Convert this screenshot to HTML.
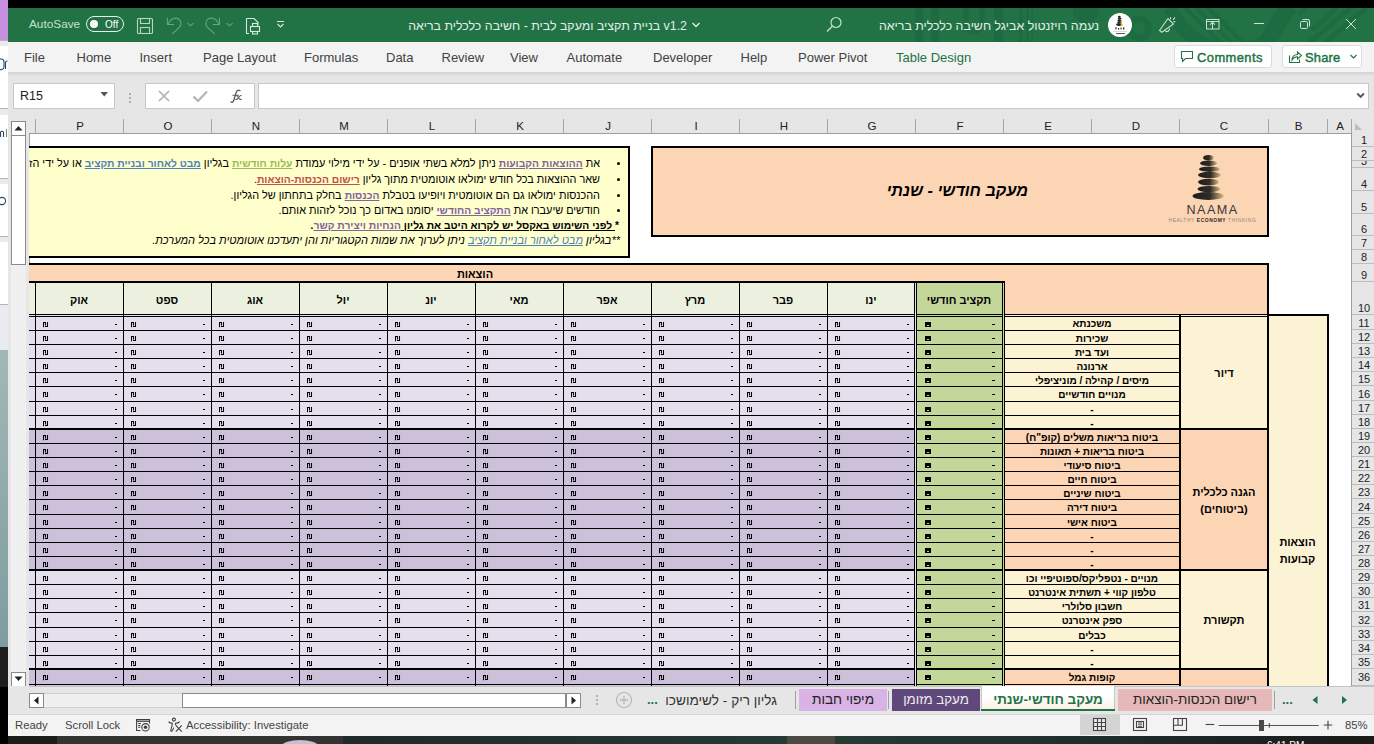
<!DOCTYPE html>
<html><head><meta charset="utf-8"><style>
*{box-sizing:border-box;margin:0;padding:0}
html,body{width:1374px;height:744px;overflow:hidden}
body{position:relative;background:#e6e6e6;font-family:"Liberation Sans",sans-serif;color:#000}
div{position:absolute}
.ui{color:#424242;font-size:13px;line-height:15px}
.he{direction:rtl}
.cell{font-weight:bold;font-size:10px;line-height:12px;text-align:center}
</style></head><body>
<div style="position:absolute;left:0px;top:0px;width:1374px;height:8px;background:#000"></div>
<div style="position:absolute;left:8px;top:8px;width:1366px;height:34px;background:#217346;overflow:hidden">
<svg width="1366" height="34" style="position:absolute;left:0;top:0" viewBox="8 8 1366 34">
 <g fill="#1f6b41">
  <rect x="915" y="8" width="8" height="34"/>
  <rect x="931" y="8" width="8" height="34"/>
  <rect x="994" y="8" width="9" height="34"/>
  <rect x="1019" y="8" width="4" height="34"/>
  <rect x="1026" y="8" width="3" height="34"/>
  <rect x="1031" y="8" width="2" height="34"/>
  <circle cx="1086" cy="10" r="13"/>
 </g>
 <path d="M966 8 V24 A8 8 0 0 0 982 24 V8" fill="none" stroke="#1f6b41" stroke-width="5"/>
 <circle cx="1139" cy="28.5" r="9.5" fill="none" stroke="#1f6b41" stroke-width="7"/>
 <path d="M1170 8 A70 70 0 0 0 1262 44" fill="none" stroke="#1f6b41" stroke-width="14"/>
 <path d="M1290 6 Q1276 24 1266 44" fill="none" stroke="#1f6b41" stroke-width="17"/>
 <g stroke="#1f6b41" stroke-width="4">
  <line x1="1185" y1="8" x2="1222" y2="44"/>
  <line x1="1196" y1="8" x2="1233" y2="44"/>
  <line x1="1208" y1="8" x2="1245" y2="44"/>
  <line x1="1299" y1="14" x2="1306" y2="8" stroke-width="4"/>
  <line x1="1312" y1="30" x2="1337" y2="8" stroke-width="5"/>
  <line x1="1308" y1="44" x2="1350" y2="8" stroke-width="5"/>
  <line x1="1324" y1="44" x2="1366" y2="8" stroke-width="5"/>
 </g>
</svg></div>
<div style="position:absolute;left:29px;top:17px;white-space:nowrap;color:#c7e0cf;font-size:11.8px;line-height:14px">AutoSave</div>
<div style="position:absolute;left:86px;top:16px;width:38px;height:16px;border:1.3px solid #e8f2ec;border-radius:8px"></div>
<div style="position:absolute;left:90px;top:20px;width:8px;height:8px;background:#fff;border-radius:50%"></div>
<div style="position:absolute;left:105px;top:19px;white-space:nowrap;color:#fff;font-size:10px;line-height:12px">Off</div>
<svg style="position:absolute;left:130px;top:10px" width="170" height="30" viewBox="130 10 170 30">
 <g fill="none" stroke="#b9d6c4" stroke-width="1.1">
  <rect x="137.5" y="18.5" width="15" height="15" rx="1"/>
  <rect x="140.5" y="18.5" width="9" height="5"/>
  <rect x="140.5" y="27.5" width="9" height="6"/>
 </g>
 <g fill="none" stroke="#6aa683" stroke-width="1.05">
  <path d="M167.4 17.8 V24.5 H174"/>
  <path d="M168.2 23.8 C170 20 172.5 18.1 175.6 18.1 C178.6 18.1 181 20.5 181 23.5 C181 25 180.3 26.3 179.3 27.3 L172.3 33.8"/>
  <path d="M187.7 23.1 L190.6 25.8 L193.4 23.1"/>
  <path d="M219.5 17.8 V24.5 H213"/>
  <path d="M218.7 23.8 C216.9 20 214.4 18.1 211.3 18.1 C208.3 18.1 205.9 20.5 205.9 23.5 C205.9 25 206.6 26.3 207.6 27.3 L214.6 33.8"/>
  <path d="M226.7 23.1 L229.6 25.8 L232.5 23.1"/>
 </g>
 <g fill="none" stroke="#d6e8dc" stroke-width="1.1">
  <path d="M246.5 18.5 H254 L258 22.5 V25 M246.5 18.5 V33.5 H249"/>
  <rect x="250.5" y="26.5" width="9" height="5"/>
  <rect x="252.5" y="23.5" width="5" height="3"/>
  <rect x="252.5" y="31.5" width="5" height="2.5"/>
  <path d="M277 21.5 H284 M277.5 24 l3 3 l3 -3"/>
 </g>
</svg>
<div style="position:absolute;left:408px;top:18px;white-space:nowrap;direction:rtl;color:#e3efe7;font-size:12.4px;line-height:17px;width:279px;text-align:right">v1.2 בניית תקציב ומעקב לבית - חשיבה כלכלית בריאה</div>
<svg style="position:absolute;left:690px;top:20px" width="12" height="10"><path d="M2.5 3 L6 6.5 L9.5 3" fill="none" stroke="#e3efe7" stroke-width="1.3"/></svg>
<svg style="position:absolute;left:825px;top:16px" width="18" height="18"><circle cx="11" cy="6.5" r="5" fill="none" stroke="#c9dfd1" stroke-width="1.2"/><line x1="7.3" y1="10.2" x2="2" y2="15.5" stroke="#c9dfd1" stroke-width="1.3"/></svg>
<div style="position:absolute;left:878px;top:18px;white-space:nowrap;direction:rtl;color:#e3efe7;font-size:12.4px;line-height:17px;width:221px;text-align:right">נעמה רויזנטול אביגל חשיבה כלכלית בריאה</div>
<svg style="position:absolute;left:1107px;top:12px" width="26" height="26" viewBox="1107 12 26 26">
<circle cx="1120" cy="25" r="12" fill="#fff"/>
<g fill="#1e1e1e"><ellipse cx="1119.3" cy="16.8" rx="1.4" ry="1"/><ellipse cx="1119.6" cy="18.6" rx="1.9" ry="1.1"/><ellipse cx="1119.4" cy="20.5" rx="2.1" ry="1.1"/><ellipse cx="1119.6" cy="22.4" rx="2.3" ry="1.2"/><ellipse cx="1119.2" cy="24.6" rx="3.1" ry="1.3"/></g>
<g fill="#e8b84a"><circle cx="1121.6" cy="20.8" r="0.9"/><circle cx="1121.3" cy="23" r="0.9"/><circle cx="1121.5" cy="25" r="0.9"/></g>
<g fill="#222"><rect x="1115.5" y="27" width="1" height="2.5"/><rect x="1118" y="28" width="1.2" height="1.5"/><rect x="1120.5" y="27.5" width="1" height="2"/><rect x="1123" y="27.5" width="1.3" height="2"/></g>
<rect x="1113" y="31" width="14" height="0.7" fill="#c8c8c8"/><rect x="1116" y="33" width="9" height="1" fill="#555"/>
</svg>
<svg style="position:absolute;left:1150px;top:10px" width="224" height="30" viewBox="1150 10 224 30">
 <g fill="none" stroke="#c9dfd1" stroke-width="1.1">
  <path d="M1159.5 30.5 L1168 18.5 L1173.5 24 L1161.8 32.3 Z"/><path d="M1165.2 30.6 A2.3 2.3 0 0 0 1169.2 28.4"/>
  <path d="M1170.5 17.3 V19.2 M1173 19.8 L1175 17.3 M1173.5 21.6 H1175.3"/>
  <rect x="1206.5" y="19.5" width="12.5" height="9.5" stroke-width="1"/><line x1="1206.5" y1="21.5" x2="1219" y2="21.5" stroke-width="1"/>
  <path d="M1212.5 29 V22.3 M1210 24.6 l2.5 -2.3 l2.5 2.3"/>
  <line x1="1254" y1="23.5" x2="1264" y2="23.5" stroke="#cfe3d6" stroke-width="1"/>
  <rect x="1300.5" y="21.5" width="7" height="7" rx="1" stroke="#cfe3d6" stroke-width="1"/><path d="M1302.5 19.5 H1308 a1.5 1.5 0 0 1 1.5 1.5 V26.5" stroke="#cfe3d6" stroke-width="1"/>
  <path d="M1346 19 L1356 29 M1356 19 L1346 29" stroke="#cfe3d6" stroke-width="1"/>
 </g>
</svg>
<div style="position:absolute;left:0px;top:0px;width:8px;height:40px;background:#c98fdf"></div>
<div style="position:absolute;left:0px;top:40px;width:8px;height:704px;background:#fff"></div>
<div style="position:absolute;left:0px;top:40px;width:8px;height:6px;background:#e9ebf0"></div>
<div style="position:absolute;left:0px;top:108px;width:8px;height:7px;background:#e9ebf0"></div>
<div style="position:absolute;left:0px;top:178px;width:8px;height:6px;background:#e9ebf0"></div>
<div style="position:absolute;left:0px;top:236px;width:8px;height:6px;background:#e9ebf0"></div>
<div style="position:absolute;left:0px;top:304px;width:8px;height:46px;background:#e9ebf0"></div>
<div style="position:absolute;left:0px;top:350px;width:8px;height:297px;background:linear-gradient(#a2b8b8,#7f9c9e)"></div>
<div style="position:absolute;left:0px;top:40px;width:8px;height:1px;background:#b4b4b4"></div>
<div style="position:absolute;left:0px;top:108px;width:8px;height:1px;background:#b4b4b4"></div>
<div style="position:absolute;left:0px;top:178px;width:8px;height:1px;background:#b4b4b4"></div>
<div style="position:absolute;left:0px;top:236px;width:8px;height:1px;background:#b4b4b4"></div>
<div style="position:absolute;left:0px;top:304px;width:8px;height:1px;background:#b4b4b4"></div>
<svg style="position:absolute;left:0;top:55px" width="8" height="160"><g fill="none" stroke="#27466a" stroke-width="1.1">
<path d="M-2 7 a3 3 0 0 1 6 0 v5 a3 3 0 0 1 -5 2"/><path d="M5.5 14 v-6 a2 2 0 0 1 2 -2"/>
<path d="M0.5 82 v-5 a2 2 0 0 1 3 0 v5"/><path d="M6.5 74 v8" stroke="#888"/>
<circle cx="2" cy="146" r="3.6"/>
</g></svg>
<div style="position:absolute;left:0px;top:647px;width:8px;height:40px;background:#1e1e1e"></div>
<div style="position:absolute;left:0px;top:687px;width:8px;height:57px;background:#000"></div>
<div style="position:absolute;left:8px;top:42px;width:1366px;height:30px;background:#f3f3f3"></div>
<div style="position:absolute;left:8px;top:72px;width:1366px;height:4px;background:linear-gradient(#d2d2d2,#e6e6e6)"></div>
<div style="position:absolute;left:24px;top:50px;white-space:nowrap;color:#424242;font-size:13px;line-height:15px">File</div>
<div style="position:absolute;left:76.5px;top:50px;white-space:nowrap;color:#424242;font-size:13px;line-height:15px">Home</div>
<div style="position:absolute;left:139.5px;top:50px;white-space:nowrap;color:#424242;font-size:13px;line-height:15px">Insert</div>
<div style="position:absolute;left:203px;top:50px;white-space:nowrap;color:#424242;font-size:13px;line-height:15px">Page Layout</div>
<div style="position:absolute;left:304px;top:50px;white-space:nowrap;color:#424242;font-size:13px;line-height:15px">Formulas</div>
<div style="position:absolute;left:386px;top:50px;white-space:nowrap;color:#424242;font-size:13px;line-height:15px">Data</div>
<div style="position:absolute;left:441.5px;top:50px;white-space:nowrap;color:#424242;font-size:13px;line-height:15px">Review</div>
<div style="position:absolute;left:510px;top:50px;white-space:nowrap;color:#424242;font-size:13px;line-height:15px">View</div>
<div style="position:absolute;left:566.5px;top:50px;white-space:nowrap;color:#424242;font-size:13px;line-height:15px">Automate</div>
<div style="position:absolute;left:653px;top:50px;white-space:nowrap;color:#424242;font-size:13px;line-height:15px">Developer</div>
<div style="position:absolute;left:740.5px;top:50px;white-space:nowrap;color:#424242;font-size:13px;line-height:15px">Help</div>
<div style="position:absolute;left:798px;top:50px;white-space:nowrap;color:#424242;font-size:13px;line-height:15px">Power Pivot</div>
<div style="position:absolute;left:896px;top:50px;white-space:nowrap;color:#217346;font-size:13px;line-height:15px">Table Design</div>
<div style="position:absolute;left:1174px;top:45px;width:98px;height:23px;background:#fff;border:1px solid #dcdcdc;border-radius:3px"></div>
<svg style="position:absolute;left:1180px;top:50px" width="16" height="14"><path d="M1.5 1.5 H12.5 V8.5 H5.5 L2.5 11.5 V8.5 H1.5 Z" fill="none" stroke="#217346" stroke-width="1.1"/></svg>
<div style="position:absolute;left:1197px;top:50px;white-space:nowrap;color:#217346;font-size:12.9px;line-height:15px;letter-spacing:0.45px;-webkit-text-stroke:0.45px #217346">Comments</div>
<div style="position:absolute;left:1282px;top:45px;width:80px;height:23px;background:#fff;border:1px solid #dcdcdc;border-radius:3px"></div>
<svg style="position:absolute;left:1288px;top:50px" width="15" height="14"><path d="M1.5 5.5 V12.5 H11.5 V9.5" fill="none" stroke="#217346" stroke-width="1.1"/><path d="M4 10 C4 6.5 6.5 4.5 9.5 4.5 V2 L13.5 5.5 L9.5 9 V6.8 C7.5 6.8 5.5 7.5 4 10 Z" fill="none" stroke="#217346" stroke-width="1.05"/></svg>
<div style="position:absolute;left:1305px;top:50px;white-space:nowrap;color:#217346;font-size:12.9px;line-height:15px;letter-spacing:0.2px;-webkit-text-stroke:0.45px #217346">Share</div>
<svg style="position:absolute;left:1349px;top:53px" width="10" height="8"><path d="M1.5 2 L4.5 5 L7.5 2" fill="none" stroke="#217346" stroke-width="1.2"/></svg>
<div style="position:absolute;left:13px;top:83px;width:102px;height:26px;background:#fff;border:1px solid #c8c8c8"></div>
<div style="position:absolute;left:20px;top:89px;white-space:nowrap;color:#222;font-size:12.5px;line-height:15px">R15</div>
<svg style="position:absolute;left:100px;top:91px" width="9" height="7"><path d="M0.5 1 H8 L4.25 5.5 Z" fill="#555"/></svg>
<div style="position:absolute;left:129px;top:93px;width:2px;height:2px;background:#9a9a9a;border-radius:1px"></div>
<div style="position:absolute;left:129px;top:97px;width:2px;height:2px;background:#9a9a9a;border-radius:1px"></div>
<div style="position:absolute;left:129px;top:101px;width:2px;height:2px;background:#9a9a9a;border-radius:1px"></div>
<div style="position:absolute;left:145px;top:83px;width:110px;height:26px;background:#fff;border:1px solid #c8c8c8"></div>
<svg style="position:absolute;left:150px;top:86px" width="100" height="20" viewBox="150 86 100 20">
<path d="M159 91 L169 101 M169 91 L159 101" stroke="#b0b0b0" stroke-width="1.6"/>
<path d="M193.5 96.5 L198 101 L207 91.5" fill="none" stroke="#b4b4b4" stroke-width="2.2"/>
</svg>
<svg style="position:absolute;left:226px;top:86px" width="20" height="20" viewBox="226 86 20 20"><g fill="none" stroke="#5c5c5c" stroke-linecap="round"><path d="M240 90.6 C238.2 89.8 236.6 90.6 236.1 92.6 L233.6 100.8 C233.2 102.2 232 102.6 230.9 102" stroke-width="1.35"/><path d="M232.9 95.2 H238.4" stroke-width="1.1"/><path d="M236.2 95.6 C237.4 95.4 238.2 97 239 98.4 C239.6 99.4 240.4 99.6 241.3 99.2 M241.2 95.6 C240.6 95.4 239.8 96 238.8 97.2 L237.4 98.8 C236.8 99.5 236.2 99.6 235.7 99.3" stroke-width="1.05"/></g></svg>
<div style="position:absolute;left:258px;top:83px;width:1111px;height:26px;background:#fff;border:1px solid #c8c8c8"></div>
<svg style="position:absolute;left:1356px;top:92px" width="10" height="8"><path d="M1.3 1.5 L4.6 4.8 L7.9 1.5" fill="none" stroke="#555" stroke-width="1.9"/></svg>
<div style="left:11px;top:121px;width:15px;height:15px;background:#fff;border:1px solid #8a8a8a"></div>
<svg style="left:13px;top:124px;position:absolute" width="11" height="8"><path d="M1.5 6.5 L5.5 2 L9.5 6.5 Z" fill="#222"/></svg>
<div style="left:11px;top:136px;width:15px;height:536px;background:#f0f0f0"></div>
<div style="left:11px;top:135px;width:15px;height:130px;background:#fff;border:1px solid #8a8a8a"></div>
<div style="left:11px;top:672px;width:15px;height:15px;background:#fff;border:1px solid #8a8a8a"></div>
<svg style="left:13px;top:675px;position:absolute" width="11" height="8"><path d="M1.5 1.5 L5.5 6 L9.5 1.5 Z" fill="#222"/></svg>
<div style="left:29px;top:133px;width:1322px;height:553px;background:#fff"></div>
<div style="left:29px;top:133px;width:1px;height:553px;background:#a0a0a0"></div>
<div style="left:35px;top:119px;width:1px;height:14px;background:#a6a6a6"></div>
<div style="left:36px;top:120px;white-space:nowrap;width:88px;text-align:center;font-size:11.5px;line-height:13px;color:#222">P</div>
<div style="left:123px;top:119px;width:1px;height:14px;background:#a6a6a6"></div>
<div style="left:124px;top:120px;white-space:nowrap;width:88px;text-align:center;font-size:11.5px;line-height:13px;color:#222">O</div>
<div style="left:211px;top:119px;width:1px;height:14px;background:#a6a6a6"></div>
<div style="left:212px;top:120px;white-space:nowrap;width:88px;text-align:center;font-size:11.5px;line-height:13px;color:#222">N</div>
<div style="left:299px;top:119px;width:1px;height:14px;background:#a6a6a6"></div>
<div style="left:300px;top:120px;white-space:nowrap;width:88px;text-align:center;font-size:11.5px;line-height:13px;color:#222">M</div>
<div style="left:387px;top:119px;width:1px;height:14px;background:#a6a6a6"></div>
<div style="left:388px;top:120px;white-space:nowrap;width:88px;text-align:center;font-size:11.5px;line-height:13px;color:#222">L</div>
<div style="left:475px;top:119px;width:1px;height:14px;background:#a6a6a6"></div>
<div style="left:476px;top:120px;white-space:nowrap;width:88px;text-align:center;font-size:11.5px;line-height:13px;color:#222">K</div>
<div style="left:563px;top:119px;width:1px;height:14px;background:#a6a6a6"></div>
<div style="left:564px;top:120px;white-space:nowrap;width:88px;text-align:center;font-size:11.5px;line-height:13px;color:#222">J</div>
<div style="left:651px;top:119px;width:1px;height:14px;background:#a6a6a6"></div>
<div style="left:652px;top:120px;white-space:nowrap;width:88px;text-align:center;font-size:11.5px;line-height:13px;color:#222">I</div>
<div style="left:739px;top:119px;width:1px;height:14px;background:#a6a6a6"></div>
<div style="left:740px;top:120px;white-space:nowrap;width:88px;text-align:center;font-size:11.5px;line-height:13px;color:#222">H</div>
<div style="left:827px;top:119px;width:1px;height:14px;background:#a6a6a6"></div>
<div style="left:828px;top:120px;white-space:nowrap;width:88px;text-align:center;font-size:11.5px;line-height:13px;color:#222">G</div>
<div style="left:915px;top:119px;width:1px;height:14px;background:#a6a6a6"></div>
<div style="left:916px;top:120px;white-space:nowrap;width:88px;text-align:center;font-size:11.5px;line-height:13px;color:#222">F</div>
<div style="left:1003px;top:119px;width:1px;height:14px;background:#a6a6a6"></div>
<div style="left:1004px;top:120px;white-space:nowrap;width:88px;text-align:center;font-size:11.5px;line-height:13px;color:#222">E</div>
<div style="left:1091px;top:119px;width:1px;height:14px;background:#a6a6a6"></div>
<div style="left:1092px;top:120px;white-space:nowrap;width:88px;text-align:center;font-size:11.5px;line-height:13px;color:#222">D</div>
<div style="left:1179px;top:119px;width:1px;height:14px;background:#a6a6a6"></div>
<div style="left:1180px;top:120px;white-space:nowrap;width:88px;text-align:center;font-size:11.5px;line-height:13px;color:#222">C</div>
<div style="left:1268px;top:119px;width:1px;height:14px;background:#a6a6a6"></div>
<div style="left:1269px;top:120px;white-space:nowrap;width:59px;text-align:center;font-size:11.5px;line-height:13px;color:#222">B</div>
<div style="left:1327px;top:119px;width:1px;height:14px;background:#a6a6a6"></div>
<div style="left:1328px;top:120px;white-space:nowrap;width:24px;text-align:center;font-size:11.5px;line-height:13px;color:#222">A</div>
<div style="left:1351px;top:119px;width:1px;height:14px;background:#a6a6a6"></div>
<div style="left:29px;top:133px;width:1322px;height:1px;background:#9e9e9e"></div>
<svg style="position:absolute;left:1354px;top:122px" width="10" height="10"><path d="M1 1 V8 H8 Z" fill="#bdbdbd"/></svg>
<div style="left:1351px;top:133px;width:1px;height:553px;background:#9e9e9e"></div>
<div style="left:1352px;top:133px;width:22px;height:14px;overflow:hidden;border-bottom:1px solid #bcbcbc"><div style="left:0;top:1px;width:24px;text-align:center;font-size:11px;line-height:13px;color:#222">1</div></div>
<div style="left:1352px;top:147px;width:22px;height:14px;overflow:hidden;border-bottom:1px solid #bcbcbc"><div style="left:0;top:1px;width:24px;text-align:center;font-size:11px;line-height:13px;color:#222">2</div></div>
<div style="left:1352px;top:161px;width:22px;height:7px;overflow:hidden;border-bottom:1px solid #bcbcbc"><div style="left:0;top:-6px;width:24px;text-align:center;font-size:11px;line-height:13px;color:#222">3</div></div>
<div style="left:1352px;top:168px;width:22px;height:23px;overflow:hidden;border-bottom:1px solid #bcbcbc"><div style="left:0;top:10px;width:24px;text-align:center;font-size:11px;line-height:13px;color:#222">4</div></div>
<div style="left:1352px;top:191px;width:22px;height:23px;overflow:hidden;border-bottom:1px solid #bcbcbc"><div style="left:0;top:10px;width:24px;text-align:center;font-size:11px;line-height:13px;color:#222">5</div></div>
<div style="left:1352px;top:214px;width:22px;height:22px;overflow:hidden;border-bottom:1px solid #bcbcbc"><div style="left:0;top:9px;width:24px;text-align:center;font-size:11px;line-height:13px;color:#222">6</div></div>
<div style="left:1352px;top:236px;width:22px;height:14px;overflow:hidden;border-bottom:1px solid #bcbcbc"><div style="left:0;top:1px;width:24px;text-align:center;font-size:11px;line-height:13px;color:#222">7</div></div>
<div style="left:1352px;top:250px;width:22px;height:14px;overflow:hidden;border-bottom:1px solid #bcbcbc"><div style="left:0;top:1px;width:24px;text-align:center;font-size:11px;line-height:13px;color:#222">8</div></div>
<div style="left:1352px;top:264px;width:22px;height:18px;overflow:hidden;border-bottom:1px solid #bcbcbc"><div style="left:0;top:5px;width:24px;text-align:center;font-size:11px;line-height:13px;color:#222">9</div></div>
<div style="left:1352px;top:282px;width:22px;height:33px;overflow:hidden;border-bottom:1px solid #bcbcbc"><div style="left:0;top:20px;width:24px;text-align:center;font-size:11px;line-height:13px;color:#222">10</div></div>
<div style="left:1352px;top:315px;width:22px;height:15px;overflow:hidden;border-bottom:1px solid #bcbcbc"><div style="left:0;top:2px;width:24px;text-align:center;font-size:11px;line-height:13px;color:#222">11</div></div>
<div style="left:1352px;top:330px;width:22px;height:14px;overflow:hidden;border-bottom:1px solid #bcbcbc"><div style="left:0;top:1px;width:24px;text-align:center;font-size:11px;line-height:13px;color:#222">12</div></div>
<div style="left:1352px;top:344px;width:22px;height:14px;overflow:hidden;border-bottom:1px solid #bcbcbc"><div style="left:0;top:1px;width:24px;text-align:center;font-size:11px;line-height:13px;color:#222">13</div></div>
<div style="left:1352px;top:358px;width:22px;height:14px;overflow:hidden;border-bottom:1px solid #bcbcbc"><div style="left:0;top:1px;width:24px;text-align:center;font-size:11px;line-height:13px;color:#222">14</div></div>
<div style="left:1352px;top:372px;width:22px;height:14px;overflow:hidden;border-bottom:1px solid #bcbcbc"><div style="left:0;top:1px;width:24px;text-align:center;font-size:11px;line-height:13px;color:#222">15</div></div>
<div style="left:1352px;top:386px;width:22px;height:15px;overflow:hidden;border-bottom:1px solid #bcbcbc"><div style="left:0;top:2px;width:24px;text-align:center;font-size:11px;line-height:13px;color:#222">16</div></div>
<div style="left:1352px;top:401px;width:22px;height:14px;overflow:hidden;border-bottom:1px solid #bcbcbc"><div style="left:0;top:1px;width:24px;text-align:center;font-size:11px;line-height:13px;color:#222">17</div></div>
<div style="left:1352px;top:415px;width:22px;height:14px;overflow:hidden;border-bottom:1px solid #bcbcbc"><div style="left:0;top:1px;width:24px;text-align:center;font-size:11px;line-height:13px;color:#222">18</div></div>
<div style="left:1352px;top:429px;width:22px;height:14px;overflow:hidden;border-bottom:1px solid #bcbcbc"><div style="left:0;top:1px;width:24px;text-align:center;font-size:11px;line-height:13px;color:#222">19</div></div>
<div style="left:1352px;top:443px;width:22px;height:14px;overflow:hidden;border-bottom:1px solid #bcbcbc"><div style="left:0;top:1px;width:24px;text-align:center;font-size:11px;line-height:13px;color:#222">20</div></div>
<div style="left:1352px;top:457px;width:22px;height:14px;overflow:hidden;border-bottom:1px solid #bcbcbc"><div style="left:0;top:1px;width:24px;text-align:center;font-size:11px;line-height:13px;color:#222">21</div></div>
<div style="left:1352px;top:471px;width:22px;height:14px;overflow:hidden;border-bottom:1px solid #bcbcbc"><div style="left:0;top:1px;width:24px;text-align:center;font-size:11px;line-height:13px;color:#222">22</div></div>
<div style="left:1352px;top:485px;width:22px;height:14px;overflow:hidden;border-bottom:1px solid #bcbcbc"><div style="left:0;top:1px;width:24px;text-align:center;font-size:11px;line-height:13px;color:#222">23</div></div>
<div style="left:1352px;top:499px;width:22px;height:15px;overflow:hidden;border-bottom:1px solid #bcbcbc"><div style="left:0;top:2px;width:24px;text-align:center;font-size:11px;line-height:13px;color:#222">24</div></div>
<div style="left:1352px;top:514px;width:22px;height:14px;overflow:hidden;border-bottom:1px solid #bcbcbc"><div style="left:0;top:1px;width:24px;text-align:center;font-size:11px;line-height:13px;color:#222">25</div></div>
<div style="left:1352px;top:528px;width:22px;height:14px;overflow:hidden;border-bottom:1px solid #bcbcbc"><div style="left:0;top:1px;width:24px;text-align:center;font-size:11px;line-height:13px;color:#222">26</div></div>
<div style="left:1352px;top:542px;width:22px;height:14px;overflow:hidden;border-bottom:1px solid #bcbcbc"><div style="left:0;top:1px;width:24px;text-align:center;font-size:11px;line-height:13px;color:#222">27</div></div>
<div style="left:1352px;top:556px;width:22px;height:14px;overflow:hidden;border-bottom:1px solid #bcbcbc"><div style="left:0;top:1px;width:24px;text-align:center;font-size:11px;line-height:13px;color:#222">28</div></div>
<div style="left:1352px;top:570px;width:22px;height:14px;overflow:hidden;border-bottom:1px solid #bcbcbc"><div style="left:0;top:1px;width:24px;text-align:center;font-size:11px;line-height:13px;color:#222">29</div></div>
<div style="left:1352px;top:584px;width:22px;height:14px;overflow:hidden;border-bottom:1px solid #bcbcbc"><div style="left:0;top:1px;width:24px;text-align:center;font-size:11px;line-height:13px;color:#222">30</div></div>
<div style="left:1352px;top:598px;width:22px;height:14px;overflow:hidden;border-bottom:1px solid #bcbcbc"><div style="left:0;top:1px;width:24px;text-align:center;font-size:11px;line-height:13px;color:#222">31</div></div>
<div style="left:1352px;top:612px;width:22px;height:15px;overflow:hidden;border-bottom:1px solid #bcbcbc"><div style="left:0;top:2px;width:24px;text-align:center;font-size:11px;line-height:13px;color:#222">32</div></div>
<div style="left:1352px;top:627px;width:22px;height:14px;overflow:hidden;border-bottom:1px solid #bcbcbc"><div style="left:0;top:1px;width:24px;text-align:center;font-size:11px;line-height:13px;color:#222">33</div></div>
<div style="left:1352px;top:641px;width:22px;height:14px;overflow:hidden;border-bottom:1px solid #bcbcbc"><div style="left:0;top:1px;width:24px;text-align:center;font-size:11px;line-height:13px;color:#222">34</div></div>
<div style="left:1352px;top:655px;width:22px;height:14px;overflow:hidden;border-bottom:1px solid #bcbcbc"><div style="left:0;top:1px;width:24px;text-align:center;font-size:11px;line-height:13px;color:#222">35</div></div>
<div style="left:1352px;top:669px;width:22px;height:17px;overflow:hidden;border-bottom:1px solid #bcbcbc"><div style="left:0;top:2px;width:24px;text-align:center;font-size:11px;line-height:13px;color:#222">36</div></div>
<div style="left:29px;top:146px;width:601px;height:112px;background:#ffffcc"></div>
<div style="left:29px;top:146px;width:599px;height:110px;overflow:hidden">
<div style="left:0px;top:11px;white-space:nowrap;direction:rtl;right:28px;left:auto;font-size:10.85px;line-height:13px;color:#000">את <span style="color:#8064a2;text-decoration:underline;font-weight:bold;font-size:10.3px;">ההוצאות הקבועות</span> ניתן למלא בשתי אופנים - על ידי מילוי עמודת <span style="color:#9bbb59;text-decoration:underline;font-weight:bold;font-size:10.3px;">עלות חודשית</span> בגליון <span style="color:#4f81bd;text-decoration:underline;font-weight:bold;font-size:10.3px;">מבט לאחור ובניית תקציב</span> או על ידי הזנה ידנית</div>
<div style="left:588px;top:16px;width:3px;height:3px;background:#000;border-radius:50%"></div>
<div style="left:0px;top:27px;white-space:nowrap;direction:rtl;right:28px;left:auto;font-size:10.85px;line-height:13px;color:#000">שאר ההוצאות בכל חודש ימולאו אוטומטית מתוך גליון <span style="color:#c0504d;text-decoration:underline;font-weight:bold;font-size:10.3px;">רישום הכנסות-הוצאות</span>.</div>
<div style="left:588px;top:32px;width:3px;height:3px;background:#000;border-radius:50%"></div>
<div style="left:0px;top:43px;white-space:nowrap;direction:rtl;right:28px;left:auto;font-size:10.85px;line-height:13px;color:#000">ההכנסות ימולאו גם הם אוטומטית ויופיעו בטבלת <span style="color:#8064a2;text-decoration:underline;font-weight:bold;font-size:10.3px;">הכנסות</span> בחלק בתחתון של הגליון.</div>
<div style="left:588px;top:48px;width:3px;height:3px;background:#000;border-radius:50%"></div>
<div style="left:0px;top:58px;white-space:nowrap;direction:rtl;right:28px;left:auto;font-size:10.85px;line-height:13px;color:#000">חודשים שיעברו את <span style="color:#8064a2;text-decoration:underline;font-weight:bold;font-size:10.3px;">התקציב החודשי</span> יסומנו באדום כך נוכל לזהות אותם.</div>
<div style="left:588px;top:63px;width:3px;height:3px;background:#000;border-radius:50%"></div>
<div style="left:0px;top:73px;white-space:nowrap;right:9px;left:auto;font-size:10.3px;line-height:13px;font-weight:bold">*</div>
<div style="left:0px;top:73px;white-space:nowrap;direction:rtl;right:13px;left:auto;font-size:10.3px;line-height:13px;font-weight:bold"><span style="text-decoration:underline">&nbsp;לפני השימוש באקסל יש לקרוא היטב את גליון </span><span style="color:#8064a2;text-decoration:underline;font-weight:bold;font-size:10.3px;">הנחיות ויצירת קשר</span>.</div>
<div style="left:0px;top:88px;white-space:nowrap;direction:rtl;right:8px;left:auto;font-size:11px;line-height:13px;font-style:italic">**בגליון <span style="color:#4f81bd;text-decoration:underline;">מבט לאחור ובניית תקציב</span> ניתן לערוך את שמות הקטגוריות והן יתעדכנו אוטומטית בכל המערכת.</div>
</div>
<div style="left:651px;top:146px;width:617px;height:90px;background:#fcd5b4"></div>
<div style="left:868px;top:181px;white-space:nowrap;direction:rtl;width:160px;text-align:right;font-size:16.2px;line-height:18px;font-weight:bold;font-style:italic">מעקב חודשי - שנתי</div>
<svg style="position:absolute;left:1160px;top:148px" width="104" height="82">
<defs><linearGradient id="st" x1="0" x2="1" y1="0" y2="0"><stop offset="0" stop-color="#1f1d1c"/><stop offset="0.55" stop-color="#2e2b28"/><stop offset="0.8" stop-color="#8d7a5a"/><stop offset="1" stop-color="#d9bd86"/></linearGradient></defs>
<g fill="url(#st)">
<ellipse cx="48.5" cy="9.8" rx="5.5" ry="2.8"/>
<ellipse cx="48.6" cy="15.3" rx="8.6" ry="2.8"/>
<ellipse cx="49.5" cy="21.2" rx="10.5" ry="2.7"/>
<ellipse cx="49.5" cy="27" rx="11.5" ry="3.3"/>
<ellipse cx="48.5" cy="34.1" rx="10.5" ry="3.3"/>
<ellipse cx="49" cy="41" rx="11.5" ry="3.1"/>
<ellipse cx="48.2" cy="48" rx="15.7" ry="3.9"/>
</g>
<text x="52.6" y="65.5" text-anchor="middle" font-family="Liberation Sans" font-size="12.6" fill="#383838" letter-spacing="1.5">NAAMA</text>
<text x="52.4" y="73.8" text-anchor="middle" font-family="Liberation Sans" font-size="4.9" fill="#8a8580" letter-spacing="0.6">HEALTHY <tspan font-weight="bold" fill="#2a2a2a">ECONOMY</tspan> THINKING</text>
</svg>
<div style="left:29px;top:265px;width:1238px;height:50px;background:#fcd5b4"></div>
<div style="left:35px;top:268px;white-space:nowrap;direction:rtl;width:880px;text-align:center;font-size:11px;line-height:13px;font-weight:bold">הוצאות</div>
<div style="left:29px;top:283px;width:975px;height:31px;background:#ebf1de"></div>
<div style="left:916px;top:283px;width:87px;height:31px;background:#c4d79b"></div>
<div style="left:35px;top:294px;white-space:nowrap;direction:rtl;width:88px;text-align:center;font-size:11px;line-height:13px;font-weight:bold">אוק</div>
<div style="left:123px;top:294px;white-space:nowrap;direction:rtl;width:88px;text-align:center;font-size:11px;line-height:13px;font-weight:bold">ספט</div>
<div style="left:211px;top:294px;white-space:nowrap;direction:rtl;width:88px;text-align:center;font-size:11px;line-height:13px;font-weight:bold">אוג</div>
<div style="left:299px;top:294px;white-space:nowrap;direction:rtl;width:88px;text-align:center;font-size:11px;line-height:13px;font-weight:bold">יול</div>
<div style="left:387px;top:294px;white-space:nowrap;direction:rtl;width:88px;text-align:center;font-size:11px;line-height:13px;font-weight:bold">יונ</div>
<div style="left:475px;top:294px;white-space:nowrap;direction:rtl;width:88px;text-align:center;font-size:11px;line-height:13px;font-weight:bold">מאי</div>
<div style="left:563px;top:294px;white-space:nowrap;direction:rtl;width:88px;text-align:center;font-size:11px;line-height:13px;font-weight:bold">אפר</div>
<div style="left:651px;top:294px;white-space:nowrap;direction:rtl;width:88px;text-align:center;font-size:11px;line-height:13px;font-weight:bold">מרץ</div>
<div style="left:739px;top:294px;white-space:nowrap;direction:rtl;width:88px;text-align:center;font-size:11px;line-height:13px;font-weight:bold">פבר</div>
<div style="left:827px;top:294px;white-space:nowrap;direction:rtl;width:88px;text-align:center;font-size:11px;line-height:13px;font-weight:bold">ינו</div>
<div style="left:915px;top:294px;white-space:nowrap;direction:rtl;width:88px;text-align:center;font-size:11px;line-height:13px;font-weight:bold">תקציב חודשי</div>
<div style="left:29px;top:315px;width:886px;height:15px;background:#e4dfec"></div>
<div style="left:915px;top:315px;width:89px;height:15px;background:#c4d79b"></div>
<div style="left:1004px;top:315px;width:176px;height:15px;background:#fcf2d4"></div>
<div style="left:43px;top:322px;width:6px;height:5px;"><svg width="6" height="6" style="position:absolute;left:0;top:0"><path d="M0.5 5.2 V0.5 H2.5 V3" fill="none" stroke="#000" stroke-width="1.05"/><path d="M4.5 0 V4.5 H2.5 V3.6" fill="none" stroke="#000" stroke-width="1.05"/></svg></div>
<div style="left:115px;top:324px;width:2.4px;height:1px;background:#000"></div>
<div style="left:131px;top:322px;width:6px;height:5px;"><svg width="6" height="6" style="position:absolute;left:0;top:0"><path d="M0.5 5.2 V0.5 H2.5 V3" fill="none" stroke="#000" stroke-width="1.05"/><path d="M4.5 0 V4.5 H2.5 V3.6" fill="none" stroke="#000" stroke-width="1.05"/></svg></div>
<div style="left:203px;top:324px;width:2.4px;height:1px;background:#000"></div>
<div style="left:219px;top:322px;width:6px;height:5px;"><svg width="6" height="6" style="position:absolute;left:0;top:0"><path d="M0.5 5.2 V0.5 H2.5 V3" fill="none" stroke="#000" stroke-width="1.05"/><path d="M4.5 0 V4.5 H2.5 V3.6" fill="none" stroke="#000" stroke-width="1.05"/></svg></div>
<div style="left:291px;top:324px;width:2.4px;height:1px;background:#000"></div>
<div style="left:307px;top:322px;width:6px;height:5px;"><svg width="6" height="6" style="position:absolute;left:0;top:0"><path d="M0.5 5.2 V0.5 H2.5 V3" fill="none" stroke="#000" stroke-width="1.05"/><path d="M4.5 0 V4.5 H2.5 V3.6" fill="none" stroke="#000" stroke-width="1.05"/></svg></div>
<div style="left:379px;top:324px;width:2.4px;height:1px;background:#000"></div>
<div style="left:395px;top:322px;width:6px;height:5px;"><svg width="6" height="6" style="position:absolute;left:0;top:0"><path d="M0.5 5.2 V0.5 H2.5 V3" fill="none" stroke="#000" stroke-width="1.05"/><path d="M4.5 0 V4.5 H2.5 V3.6" fill="none" stroke="#000" stroke-width="1.05"/></svg></div>
<div style="left:467px;top:324px;width:2.4px;height:1px;background:#000"></div>
<div style="left:483px;top:322px;width:6px;height:5px;"><svg width="6" height="6" style="position:absolute;left:0;top:0"><path d="M0.5 5.2 V0.5 H2.5 V3" fill="none" stroke="#000" stroke-width="1.05"/><path d="M4.5 0 V4.5 H2.5 V3.6" fill="none" stroke="#000" stroke-width="1.05"/></svg></div>
<div style="left:555px;top:324px;width:2.4px;height:1px;background:#000"></div>
<div style="left:571px;top:322px;width:6px;height:5px;"><svg width="6" height="6" style="position:absolute;left:0;top:0"><path d="M0.5 5.2 V0.5 H2.5 V3" fill="none" stroke="#000" stroke-width="1.05"/><path d="M4.5 0 V4.5 H2.5 V3.6" fill="none" stroke="#000" stroke-width="1.05"/></svg></div>
<div style="left:643px;top:324px;width:2.4px;height:1px;background:#000"></div>
<div style="left:659px;top:322px;width:6px;height:5px;"><svg width="6" height="6" style="position:absolute;left:0;top:0"><path d="M0.5 5.2 V0.5 H2.5 V3" fill="none" stroke="#000" stroke-width="1.05"/><path d="M4.5 0 V4.5 H2.5 V3.6" fill="none" stroke="#000" stroke-width="1.05"/></svg></div>
<div style="left:731px;top:324px;width:2.4px;height:1px;background:#000"></div>
<div style="left:747px;top:322px;width:6px;height:5px;"><svg width="6" height="6" style="position:absolute;left:0;top:0"><path d="M0.5 5.2 V0.5 H2.5 V3" fill="none" stroke="#000" stroke-width="1.05"/><path d="M4.5 0 V4.5 H2.5 V3.6" fill="none" stroke="#000" stroke-width="1.05"/></svg></div>
<div style="left:819px;top:324px;width:2.4px;height:1px;background:#000"></div>
<div style="left:835px;top:322px;width:6px;height:5px;"><svg width="6" height="6" style="position:absolute;left:0;top:0"><path d="M0.5 5.2 V0.5 H2.5 V3" fill="none" stroke="#000" stroke-width="1.05"/><path d="M4.5 0 V4.5 H2.5 V3.6" fill="none" stroke="#000" stroke-width="1.05"/></svg></div>
<div style="left:907px;top:324px;width:2.4px;height:1px;background:#000"></div>
<div style="left:925px;top:322px;width:6px;height:5px;background:#000"><div style="left:2px;top:3px;width:2px;height:1px;background:#c4d79b"></div></div>
<div style="left:992px;top:324px;width:3px;height:1px;background:#000"></div>
<div style="left:1004px;top:317px;white-space:nowrap;direction:rtl;width:176px;text-align:center;font-size:10px;line-height:13px;font-weight:bold">משכנתא</div>
<div style="left:29px;top:330px;width:886px;height:14px;background:#e4dfec"></div>
<div style="left:915px;top:330px;width:89px;height:14px;background:#c4d79b"></div>
<div style="left:1004px;top:330px;width:176px;height:14px;background:#fcf2d4"></div>
<div style="left:43px;top:336px;width:6px;height:5px;"><svg width="6" height="6" style="position:absolute;left:0;top:0"><path d="M0.5 5.2 V0.5 H2.5 V3" fill="none" stroke="#000" stroke-width="1.05"/><path d="M4.5 0 V4.5 H2.5 V3.6" fill="none" stroke="#000" stroke-width="1.05"/></svg></div>
<div style="left:115px;top:338px;width:2.4px;height:1px;background:#000"></div>
<div style="left:131px;top:336px;width:6px;height:5px;"><svg width="6" height="6" style="position:absolute;left:0;top:0"><path d="M0.5 5.2 V0.5 H2.5 V3" fill="none" stroke="#000" stroke-width="1.05"/><path d="M4.5 0 V4.5 H2.5 V3.6" fill="none" stroke="#000" stroke-width="1.05"/></svg></div>
<div style="left:203px;top:338px;width:2.4px;height:1px;background:#000"></div>
<div style="left:219px;top:336px;width:6px;height:5px;"><svg width="6" height="6" style="position:absolute;left:0;top:0"><path d="M0.5 5.2 V0.5 H2.5 V3" fill="none" stroke="#000" stroke-width="1.05"/><path d="M4.5 0 V4.5 H2.5 V3.6" fill="none" stroke="#000" stroke-width="1.05"/></svg></div>
<div style="left:291px;top:338px;width:2.4px;height:1px;background:#000"></div>
<div style="left:307px;top:336px;width:6px;height:5px;"><svg width="6" height="6" style="position:absolute;left:0;top:0"><path d="M0.5 5.2 V0.5 H2.5 V3" fill="none" stroke="#000" stroke-width="1.05"/><path d="M4.5 0 V4.5 H2.5 V3.6" fill="none" stroke="#000" stroke-width="1.05"/></svg></div>
<div style="left:379px;top:338px;width:2.4px;height:1px;background:#000"></div>
<div style="left:395px;top:336px;width:6px;height:5px;"><svg width="6" height="6" style="position:absolute;left:0;top:0"><path d="M0.5 5.2 V0.5 H2.5 V3" fill="none" stroke="#000" stroke-width="1.05"/><path d="M4.5 0 V4.5 H2.5 V3.6" fill="none" stroke="#000" stroke-width="1.05"/></svg></div>
<div style="left:467px;top:338px;width:2.4px;height:1px;background:#000"></div>
<div style="left:483px;top:336px;width:6px;height:5px;"><svg width="6" height="6" style="position:absolute;left:0;top:0"><path d="M0.5 5.2 V0.5 H2.5 V3" fill="none" stroke="#000" stroke-width="1.05"/><path d="M4.5 0 V4.5 H2.5 V3.6" fill="none" stroke="#000" stroke-width="1.05"/></svg></div>
<div style="left:555px;top:338px;width:2.4px;height:1px;background:#000"></div>
<div style="left:571px;top:336px;width:6px;height:5px;"><svg width="6" height="6" style="position:absolute;left:0;top:0"><path d="M0.5 5.2 V0.5 H2.5 V3" fill="none" stroke="#000" stroke-width="1.05"/><path d="M4.5 0 V4.5 H2.5 V3.6" fill="none" stroke="#000" stroke-width="1.05"/></svg></div>
<div style="left:643px;top:338px;width:2.4px;height:1px;background:#000"></div>
<div style="left:659px;top:336px;width:6px;height:5px;"><svg width="6" height="6" style="position:absolute;left:0;top:0"><path d="M0.5 5.2 V0.5 H2.5 V3" fill="none" stroke="#000" stroke-width="1.05"/><path d="M4.5 0 V4.5 H2.5 V3.6" fill="none" stroke="#000" stroke-width="1.05"/></svg></div>
<div style="left:731px;top:338px;width:2.4px;height:1px;background:#000"></div>
<div style="left:747px;top:336px;width:6px;height:5px;"><svg width="6" height="6" style="position:absolute;left:0;top:0"><path d="M0.5 5.2 V0.5 H2.5 V3" fill="none" stroke="#000" stroke-width="1.05"/><path d="M4.5 0 V4.5 H2.5 V3.6" fill="none" stroke="#000" stroke-width="1.05"/></svg></div>
<div style="left:819px;top:338px;width:2.4px;height:1px;background:#000"></div>
<div style="left:835px;top:336px;width:6px;height:5px;"><svg width="6" height="6" style="position:absolute;left:0;top:0"><path d="M0.5 5.2 V0.5 H2.5 V3" fill="none" stroke="#000" stroke-width="1.05"/><path d="M4.5 0 V4.5 H2.5 V3.6" fill="none" stroke="#000" stroke-width="1.05"/></svg></div>
<div style="left:907px;top:338px;width:2.4px;height:1px;background:#000"></div>
<div style="left:925px;top:336px;width:6px;height:5px;background:#000"><div style="left:2px;top:3px;width:2px;height:1px;background:#c4d79b"></div></div>
<div style="left:992px;top:338px;width:3px;height:1px;background:#000"></div>
<div style="left:1004px;top:332px;white-space:nowrap;direction:rtl;width:176px;text-align:center;font-size:10px;line-height:13px;font-weight:bold">שכירות</div>
<div style="left:29px;top:344px;width:886px;height:14px;background:#e4dfec"></div>
<div style="left:915px;top:344px;width:89px;height:14px;background:#c4d79b"></div>
<div style="left:1004px;top:344px;width:176px;height:14px;background:#fcf2d4"></div>
<div style="left:43px;top:350px;width:6px;height:5px;"><svg width="6" height="6" style="position:absolute;left:0;top:0"><path d="M0.5 5.2 V0.5 H2.5 V3" fill="none" stroke="#000" stroke-width="1.05"/><path d="M4.5 0 V4.5 H2.5 V3.6" fill="none" stroke="#000" stroke-width="1.05"/></svg></div>
<div style="left:115px;top:352px;width:2.4px;height:1px;background:#000"></div>
<div style="left:131px;top:350px;width:6px;height:5px;"><svg width="6" height="6" style="position:absolute;left:0;top:0"><path d="M0.5 5.2 V0.5 H2.5 V3" fill="none" stroke="#000" stroke-width="1.05"/><path d="M4.5 0 V4.5 H2.5 V3.6" fill="none" stroke="#000" stroke-width="1.05"/></svg></div>
<div style="left:203px;top:352px;width:2.4px;height:1px;background:#000"></div>
<div style="left:219px;top:350px;width:6px;height:5px;"><svg width="6" height="6" style="position:absolute;left:0;top:0"><path d="M0.5 5.2 V0.5 H2.5 V3" fill="none" stroke="#000" stroke-width="1.05"/><path d="M4.5 0 V4.5 H2.5 V3.6" fill="none" stroke="#000" stroke-width="1.05"/></svg></div>
<div style="left:291px;top:352px;width:2.4px;height:1px;background:#000"></div>
<div style="left:307px;top:350px;width:6px;height:5px;"><svg width="6" height="6" style="position:absolute;left:0;top:0"><path d="M0.5 5.2 V0.5 H2.5 V3" fill="none" stroke="#000" stroke-width="1.05"/><path d="M4.5 0 V4.5 H2.5 V3.6" fill="none" stroke="#000" stroke-width="1.05"/></svg></div>
<div style="left:379px;top:352px;width:2.4px;height:1px;background:#000"></div>
<div style="left:395px;top:350px;width:6px;height:5px;"><svg width="6" height="6" style="position:absolute;left:0;top:0"><path d="M0.5 5.2 V0.5 H2.5 V3" fill="none" stroke="#000" stroke-width="1.05"/><path d="M4.5 0 V4.5 H2.5 V3.6" fill="none" stroke="#000" stroke-width="1.05"/></svg></div>
<div style="left:467px;top:352px;width:2.4px;height:1px;background:#000"></div>
<div style="left:483px;top:350px;width:6px;height:5px;"><svg width="6" height="6" style="position:absolute;left:0;top:0"><path d="M0.5 5.2 V0.5 H2.5 V3" fill="none" stroke="#000" stroke-width="1.05"/><path d="M4.5 0 V4.5 H2.5 V3.6" fill="none" stroke="#000" stroke-width="1.05"/></svg></div>
<div style="left:555px;top:352px;width:2.4px;height:1px;background:#000"></div>
<div style="left:571px;top:350px;width:6px;height:5px;"><svg width="6" height="6" style="position:absolute;left:0;top:0"><path d="M0.5 5.2 V0.5 H2.5 V3" fill="none" stroke="#000" stroke-width="1.05"/><path d="M4.5 0 V4.5 H2.5 V3.6" fill="none" stroke="#000" stroke-width="1.05"/></svg></div>
<div style="left:643px;top:352px;width:2.4px;height:1px;background:#000"></div>
<div style="left:659px;top:350px;width:6px;height:5px;"><svg width="6" height="6" style="position:absolute;left:0;top:0"><path d="M0.5 5.2 V0.5 H2.5 V3" fill="none" stroke="#000" stroke-width="1.05"/><path d="M4.5 0 V4.5 H2.5 V3.6" fill="none" stroke="#000" stroke-width="1.05"/></svg></div>
<div style="left:731px;top:352px;width:2.4px;height:1px;background:#000"></div>
<div style="left:747px;top:350px;width:6px;height:5px;"><svg width="6" height="6" style="position:absolute;left:0;top:0"><path d="M0.5 5.2 V0.5 H2.5 V3" fill="none" stroke="#000" stroke-width="1.05"/><path d="M4.5 0 V4.5 H2.5 V3.6" fill="none" stroke="#000" stroke-width="1.05"/></svg></div>
<div style="left:819px;top:352px;width:2.4px;height:1px;background:#000"></div>
<div style="left:835px;top:350px;width:6px;height:5px;"><svg width="6" height="6" style="position:absolute;left:0;top:0"><path d="M0.5 5.2 V0.5 H2.5 V3" fill="none" stroke="#000" stroke-width="1.05"/><path d="M4.5 0 V4.5 H2.5 V3.6" fill="none" stroke="#000" stroke-width="1.05"/></svg></div>
<div style="left:907px;top:352px;width:2.4px;height:1px;background:#000"></div>
<div style="left:925px;top:350px;width:6px;height:5px;background:#000"><div style="left:2px;top:3px;width:2px;height:1px;background:#c4d79b"></div></div>
<div style="left:992px;top:352px;width:3px;height:1px;background:#000"></div>
<div style="left:1004px;top:346px;white-space:nowrap;direction:rtl;width:176px;text-align:center;font-size:10px;line-height:13px;font-weight:bold">ועד בית</div>
<div style="left:29px;top:358px;width:886px;height:14px;background:#e4dfec"></div>
<div style="left:915px;top:358px;width:89px;height:14px;background:#c4d79b"></div>
<div style="left:1004px;top:358px;width:176px;height:14px;background:#fcf2d4"></div>
<div style="left:43px;top:364px;width:6px;height:5px;"><svg width="6" height="6" style="position:absolute;left:0;top:0"><path d="M0.5 5.2 V0.5 H2.5 V3" fill="none" stroke="#000" stroke-width="1.05"/><path d="M4.5 0 V4.5 H2.5 V3.6" fill="none" stroke="#000" stroke-width="1.05"/></svg></div>
<div style="left:115px;top:366px;width:2.4px;height:1px;background:#000"></div>
<div style="left:131px;top:364px;width:6px;height:5px;"><svg width="6" height="6" style="position:absolute;left:0;top:0"><path d="M0.5 5.2 V0.5 H2.5 V3" fill="none" stroke="#000" stroke-width="1.05"/><path d="M4.5 0 V4.5 H2.5 V3.6" fill="none" stroke="#000" stroke-width="1.05"/></svg></div>
<div style="left:203px;top:366px;width:2.4px;height:1px;background:#000"></div>
<div style="left:219px;top:364px;width:6px;height:5px;"><svg width="6" height="6" style="position:absolute;left:0;top:0"><path d="M0.5 5.2 V0.5 H2.5 V3" fill="none" stroke="#000" stroke-width="1.05"/><path d="M4.5 0 V4.5 H2.5 V3.6" fill="none" stroke="#000" stroke-width="1.05"/></svg></div>
<div style="left:291px;top:366px;width:2.4px;height:1px;background:#000"></div>
<div style="left:307px;top:364px;width:6px;height:5px;"><svg width="6" height="6" style="position:absolute;left:0;top:0"><path d="M0.5 5.2 V0.5 H2.5 V3" fill="none" stroke="#000" stroke-width="1.05"/><path d="M4.5 0 V4.5 H2.5 V3.6" fill="none" stroke="#000" stroke-width="1.05"/></svg></div>
<div style="left:379px;top:366px;width:2.4px;height:1px;background:#000"></div>
<div style="left:395px;top:364px;width:6px;height:5px;"><svg width="6" height="6" style="position:absolute;left:0;top:0"><path d="M0.5 5.2 V0.5 H2.5 V3" fill="none" stroke="#000" stroke-width="1.05"/><path d="M4.5 0 V4.5 H2.5 V3.6" fill="none" stroke="#000" stroke-width="1.05"/></svg></div>
<div style="left:467px;top:366px;width:2.4px;height:1px;background:#000"></div>
<div style="left:483px;top:364px;width:6px;height:5px;"><svg width="6" height="6" style="position:absolute;left:0;top:0"><path d="M0.5 5.2 V0.5 H2.5 V3" fill="none" stroke="#000" stroke-width="1.05"/><path d="M4.5 0 V4.5 H2.5 V3.6" fill="none" stroke="#000" stroke-width="1.05"/></svg></div>
<div style="left:555px;top:366px;width:2.4px;height:1px;background:#000"></div>
<div style="left:571px;top:364px;width:6px;height:5px;"><svg width="6" height="6" style="position:absolute;left:0;top:0"><path d="M0.5 5.2 V0.5 H2.5 V3" fill="none" stroke="#000" stroke-width="1.05"/><path d="M4.5 0 V4.5 H2.5 V3.6" fill="none" stroke="#000" stroke-width="1.05"/></svg></div>
<div style="left:643px;top:366px;width:2.4px;height:1px;background:#000"></div>
<div style="left:659px;top:364px;width:6px;height:5px;"><svg width="6" height="6" style="position:absolute;left:0;top:0"><path d="M0.5 5.2 V0.5 H2.5 V3" fill="none" stroke="#000" stroke-width="1.05"/><path d="M4.5 0 V4.5 H2.5 V3.6" fill="none" stroke="#000" stroke-width="1.05"/></svg></div>
<div style="left:731px;top:366px;width:2.4px;height:1px;background:#000"></div>
<div style="left:747px;top:364px;width:6px;height:5px;"><svg width="6" height="6" style="position:absolute;left:0;top:0"><path d="M0.5 5.2 V0.5 H2.5 V3" fill="none" stroke="#000" stroke-width="1.05"/><path d="M4.5 0 V4.5 H2.5 V3.6" fill="none" stroke="#000" stroke-width="1.05"/></svg></div>
<div style="left:819px;top:366px;width:2.4px;height:1px;background:#000"></div>
<div style="left:835px;top:364px;width:6px;height:5px;"><svg width="6" height="6" style="position:absolute;left:0;top:0"><path d="M0.5 5.2 V0.5 H2.5 V3" fill="none" stroke="#000" stroke-width="1.05"/><path d="M4.5 0 V4.5 H2.5 V3.6" fill="none" stroke="#000" stroke-width="1.05"/></svg></div>
<div style="left:907px;top:366px;width:2.4px;height:1px;background:#000"></div>
<div style="left:925px;top:364px;width:6px;height:5px;background:#000"><div style="left:2px;top:3px;width:2px;height:1px;background:#c4d79b"></div></div>
<div style="left:992px;top:366px;width:3px;height:1px;background:#000"></div>
<div style="left:1004px;top:360px;white-space:nowrap;direction:rtl;width:176px;text-align:center;font-size:10px;line-height:13px;font-weight:bold">ארנונה</div>
<div style="left:29px;top:372px;width:886px;height:14px;background:#e4dfec"></div>
<div style="left:915px;top:372px;width:89px;height:14px;background:#c4d79b"></div>
<div style="left:1004px;top:372px;width:176px;height:14px;background:#fcf2d4"></div>
<div style="left:43px;top:378px;width:6px;height:5px;"><svg width="6" height="6" style="position:absolute;left:0;top:0"><path d="M0.5 5.2 V0.5 H2.5 V3" fill="none" stroke="#000" stroke-width="1.05"/><path d="M4.5 0 V4.5 H2.5 V3.6" fill="none" stroke="#000" stroke-width="1.05"/></svg></div>
<div style="left:115px;top:380px;width:2.4px;height:1px;background:#000"></div>
<div style="left:131px;top:378px;width:6px;height:5px;"><svg width="6" height="6" style="position:absolute;left:0;top:0"><path d="M0.5 5.2 V0.5 H2.5 V3" fill="none" stroke="#000" stroke-width="1.05"/><path d="M4.5 0 V4.5 H2.5 V3.6" fill="none" stroke="#000" stroke-width="1.05"/></svg></div>
<div style="left:203px;top:380px;width:2.4px;height:1px;background:#000"></div>
<div style="left:219px;top:378px;width:6px;height:5px;"><svg width="6" height="6" style="position:absolute;left:0;top:0"><path d="M0.5 5.2 V0.5 H2.5 V3" fill="none" stroke="#000" stroke-width="1.05"/><path d="M4.5 0 V4.5 H2.5 V3.6" fill="none" stroke="#000" stroke-width="1.05"/></svg></div>
<div style="left:291px;top:380px;width:2.4px;height:1px;background:#000"></div>
<div style="left:307px;top:378px;width:6px;height:5px;"><svg width="6" height="6" style="position:absolute;left:0;top:0"><path d="M0.5 5.2 V0.5 H2.5 V3" fill="none" stroke="#000" stroke-width="1.05"/><path d="M4.5 0 V4.5 H2.5 V3.6" fill="none" stroke="#000" stroke-width="1.05"/></svg></div>
<div style="left:379px;top:380px;width:2.4px;height:1px;background:#000"></div>
<div style="left:395px;top:378px;width:6px;height:5px;"><svg width="6" height="6" style="position:absolute;left:0;top:0"><path d="M0.5 5.2 V0.5 H2.5 V3" fill="none" stroke="#000" stroke-width="1.05"/><path d="M4.5 0 V4.5 H2.5 V3.6" fill="none" stroke="#000" stroke-width="1.05"/></svg></div>
<div style="left:467px;top:380px;width:2.4px;height:1px;background:#000"></div>
<div style="left:483px;top:378px;width:6px;height:5px;"><svg width="6" height="6" style="position:absolute;left:0;top:0"><path d="M0.5 5.2 V0.5 H2.5 V3" fill="none" stroke="#000" stroke-width="1.05"/><path d="M4.5 0 V4.5 H2.5 V3.6" fill="none" stroke="#000" stroke-width="1.05"/></svg></div>
<div style="left:555px;top:380px;width:2.4px;height:1px;background:#000"></div>
<div style="left:571px;top:378px;width:6px;height:5px;"><svg width="6" height="6" style="position:absolute;left:0;top:0"><path d="M0.5 5.2 V0.5 H2.5 V3" fill="none" stroke="#000" stroke-width="1.05"/><path d="M4.5 0 V4.5 H2.5 V3.6" fill="none" stroke="#000" stroke-width="1.05"/></svg></div>
<div style="left:643px;top:380px;width:2.4px;height:1px;background:#000"></div>
<div style="left:659px;top:378px;width:6px;height:5px;"><svg width="6" height="6" style="position:absolute;left:0;top:0"><path d="M0.5 5.2 V0.5 H2.5 V3" fill="none" stroke="#000" stroke-width="1.05"/><path d="M4.5 0 V4.5 H2.5 V3.6" fill="none" stroke="#000" stroke-width="1.05"/></svg></div>
<div style="left:731px;top:380px;width:2.4px;height:1px;background:#000"></div>
<div style="left:747px;top:378px;width:6px;height:5px;"><svg width="6" height="6" style="position:absolute;left:0;top:0"><path d="M0.5 5.2 V0.5 H2.5 V3" fill="none" stroke="#000" stroke-width="1.05"/><path d="M4.5 0 V4.5 H2.5 V3.6" fill="none" stroke="#000" stroke-width="1.05"/></svg></div>
<div style="left:819px;top:380px;width:2.4px;height:1px;background:#000"></div>
<div style="left:835px;top:378px;width:6px;height:5px;"><svg width="6" height="6" style="position:absolute;left:0;top:0"><path d="M0.5 5.2 V0.5 H2.5 V3" fill="none" stroke="#000" stroke-width="1.05"/><path d="M4.5 0 V4.5 H2.5 V3.6" fill="none" stroke="#000" stroke-width="1.05"/></svg></div>
<div style="left:907px;top:380px;width:2.4px;height:1px;background:#000"></div>
<div style="left:925px;top:378px;width:6px;height:5px;background:#000"><div style="left:2px;top:3px;width:2px;height:1px;background:#c4d79b"></div></div>
<div style="left:992px;top:380px;width:3px;height:1px;background:#000"></div>
<div style="left:1004px;top:374px;white-space:nowrap;direction:rtl;width:176px;text-align:center;font-size:10px;line-height:13px;font-weight:bold">מיסים / קהילה / מוניציפלי</div>
<div style="left:29px;top:386px;width:886px;height:15px;background:#e4dfec"></div>
<div style="left:915px;top:386px;width:89px;height:15px;background:#c4d79b"></div>
<div style="left:1004px;top:386px;width:176px;height:15px;background:#fcf2d4"></div>
<div style="left:43px;top:392px;width:6px;height:5px;"><svg width="6" height="6" style="position:absolute;left:0;top:0"><path d="M0.5 5.2 V0.5 H2.5 V3" fill="none" stroke="#000" stroke-width="1.05"/><path d="M4.5 0 V4.5 H2.5 V3.6" fill="none" stroke="#000" stroke-width="1.05"/></svg></div>
<div style="left:115px;top:394px;width:2.4px;height:1px;background:#000"></div>
<div style="left:131px;top:392px;width:6px;height:5px;"><svg width="6" height="6" style="position:absolute;left:0;top:0"><path d="M0.5 5.2 V0.5 H2.5 V3" fill="none" stroke="#000" stroke-width="1.05"/><path d="M4.5 0 V4.5 H2.5 V3.6" fill="none" stroke="#000" stroke-width="1.05"/></svg></div>
<div style="left:203px;top:394px;width:2.4px;height:1px;background:#000"></div>
<div style="left:219px;top:392px;width:6px;height:5px;"><svg width="6" height="6" style="position:absolute;left:0;top:0"><path d="M0.5 5.2 V0.5 H2.5 V3" fill="none" stroke="#000" stroke-width="1.05"/><path d="M4.5 0 V4.5 H2.5 V3.6" fill="none" stroke="#000" stroke-width="1.05"/></svg></div>
<div style="left:291px;top:394px;width:2.4px;height:1px;background:#000"></div>
<div style="left:307px;top:392px;width:6px;height:5px;"><svg width="6" height="6" style="position:absolute;left:0;top:0"><path d="M0.5 5.2 V0.5 H2.5 V3" fill="none" stroke="#000" stroke-width="1.05"/><path d="M4.5 0 V4.5 H2.5 V3.6" fill="none" stroke="#000" stroke-width="1.05"/></svg></div>
<div style="left:379px;top:394px;width:2.4px;height:1px;background:#000"></div>
<div style="left:395px;top:392px;width:6px;height:5px;"><svg width="6" height="6" style="position:absolute;left:0;top:0"><path d="M0.5 5.2 V0.5 H2.5 V3" fill="none" stroke="#000" stroke-width="1.05"/><path d="M4.5 0 V4.5 H2.5 V3.6" fill="none" stroke="#000" stroke-width="1.05"/></svg></div>
<div style="left:467px;top:394px;width:2.4px;height:1px;background:#000"></div>
<div style="left:483px;top:392px;width:6px;height:5px;"><svg width="6" height="6" style="position:absolute;left:0;top:0"><path d="M0.5 5.2 V0.5 H2.5 V3" fill="none" stroke="#000" stroke-width="1.05"/><path d="M4.5 0 V4.5 H2.5 V3.6" fill="none" stroke="#000" stroke-width="1.05"/></svg></div>
<div style="left:555px;top:394px;width:2.4px;height:1px;background:#000"></div>
<div style="left:571px;top:392px;width:6px;height:5px;"><svg width="6" height="6" style="position:absolute;left:0;top:0"><path d="M0.5 5.2 V0.5 H2.5 V3" fill="none" stroke="#000" stroke-width="1.05"/><path d="M4.5 0 V4.5 H2.5 V3.6" fill="none" stroke="#000" stroke-width="1.05"/></svg></div>
<div style="left:643px;top:394px;width:2.4px;height:1px;background:#000"></div>
<div style="left:659px;top:392px;width:6px;height:5px;"><svg width="6" height="6" style="position:absolute;left:0;top:0"><path d="M0.5 5.2 V0.5 H2.5 V3" fill="none" stroke="#000" stroke-width="1.05"/><path d="M4.5 0 V4.5 H2.5 V3.6" fill="none" stroke="#000" stroke-width="1.05"/></svg></div>
<div style="left:731px;top:394px;width:2.4px;height:1px;background:#000"></div>
<div style="left:747px;top:392px;width:6px;height:5px;"><svg width="6" height="6" style="position:absolute;left:0;top:0"><path d="M0.5 5.2 V0.5 H2.5 V3" fill="none" stroke="#000" stroke-width="1.05"/><path d="M4.5 0 V4.5 H2.5 V3.6" fill="none" stroke="#000" stroke-width="1.05"/></svg></div>
<div style="left:819px;top:394px;width:2.4px;height:1px;background:#000"></div>
<div style="left:835px;top:392px;width:6px;height:5px;"><svg width="6" height="6" style="position:absolute;left:0;top:0"><path d="M0.5 5.2 V0.5 H2.5 V3" fill="none" stroke="#000" stroke-width="1.05"/><path d="M4.5 0 V4.5 H2.5 V3.6" fill="none" stroke="#000" stroke-width="1.05"/></svg></div>
<div style="left:907px;top:394px;width:2.4px;height:1px;background:#000"></div>
<div style="left:925px;top:392px;width:6px;height:5px;background:#000"><div style="left:2px;top:3px;width:2px;height:1px;background:#c4d79b"></div></div>
<div style="left:992px;top:394px;width:3px;height:1px;background:#000"></div>
<div style="left:1004px;top:388px;white-space:nowrap;direction:rtl;width:176px;text-align:center;font-size:10px;line-height:13px;font-weight:bold">מנויים חודשיים</div>
<div style="left:29px;top:401px;width:886px;height:14px;background:#e4dfec"></div>
<div style="left:915px;top:401px;width:89px;height:14px;background:#c4d79b"></div>
<div style="left:1004px;top:401px;width:176px;height:14px;background:#fcf2d4"></div>
<div style="left:43px;top:407px;width:6px;height:5px;"><svg width="6" height="6" style="position:absolute;left:0;top:0"><path d="M0.5 5.2 V0.5 H2.5 V3" fill="none" stroke="#000" stroke-width="1.05"/><path d="M4.5 0 V4.5 H2.5 V3.6" fill="none" stroke="#000" stroke-width="1.05"/></svg></div>
<div style="left:115px;top:409px;width:2.4px;height:1px;background:#000"></div>
<div style="left:131px;top:407px;width:6px;height:5px;"><svg width="6" height="6" style="position:absolute;left:0;top:0"><path d="M0.5 5.2 V0.5 H2.5 V3" fill="none" stroke="#000" stroke-width="1.05"/><path d="M4.5 0 V4.5 H2.5 V3.6" fill="none" stroke="#000" stroke-width="1.05"/></svg></div>
<div style="left:203px;top:409px;width:2.4px;height:1px;background:#000"></div>
<div style="left:219px;top:407px;width:6px;height:5px;"><svg width="6" height="6" style="position:absolute;left:0;top:0"><path d="M0.5 5.2 V0.5 H2.5 V3" fill="none" stroke="#000" stroke-width="1.05"/><path d="M4.5 0 V4.5 H2.5 V3.6" fill="none" stroke="#000" stroke-width="1.05"/></svg></div>
<div style="left:291px;top:409px;width:2.4px;height:1px;background:#000"></div>
<div style="left:307px;top:407px;width:6px;height:5px;"><svg width="6" height="6" style="position:absolute;left:0;top:0"><path d="M0.5 5.2 V0.5 H2.5 V3" fill="none" stroke="#000" stroke-width="1.05"/><path d="M4.5 0 V4.5 H2.5 V3.6" fill="none" stroke="#000" stroke-width="1.05"/></svg></div>
<div style="left:379px;top:409px;width:2.4px;height:1px;background:#000"></div>
<div style="left:395px;top:407px;width:6px;height:5px;"><svg width="6" height="6" style="position:absolute;left:0;top:0"><path d="M0.5 5.2 V0.5 H2.5 V3" fill="none" stroke="#000" stroke-width="1.05"/><path d="M4.5 0 V4.5 H2.5 V3.6" fill="none" stroke="#000" stroke-width="1.05"/></svg></div>
<div style="left:467px;top:409px;width:2.4px;height:1px;background:#000"></div>
<div style="left:483px;top:407px;width:6px;height:5px;"><svg width="6" height="6" style="position:absolute;left:0;top:0"><path d="M0.5 5.2 V0.5 H2.5 V3" fill="none" stroke="#000" stroke-width="1.05"/><path d="M4.5 0 V4.5 H2.5 V3.6" fill="none" stroke="#000" stroke-width="1.05"/></svg></div>
<div style="left:555px;top:409px;width:2.4px;height:1px;background:#000"></div>
<div style="left:571px;top:407px;width:6px;height:5px;"><svg width="6" height="6" style="position:absolute;left:0;top:0"><path d="M0.5 5.2 V0.5 H2.5 V3" fill="none" stroke="#000" stroke-width="1.05"/><path d="M4.5 0 V4.5 H2.5 V3.6" fill="none" stroke="#000" stroke-width="1.05"/></svg></div>
<div style="left:643px;top:409px;width:2.4px;height:1px;background:#000"></div>
<div style="left:659px;top:407px;width:6px;height:5px;"><svg width="6" height="6" style="position:absolute;left:0;top:0"><path d="M0.5 5.2 V0.5 H2.5 V3" fill="none" stroke="#000" stroke-width="1.05"/><path d="M4.5 0 V4.5 H2.5 V3.6" fill="none" stroke="#000" stroke-width="1.05"/></svg></div>
<div style="left:731px;top:409px;width:2.4px;height:1px;background:#000"></div>
<div style="left:747px;top:407px;width:6px;height:5px;"><svg width="6" height="6" style="position:absolute;left:0;top:0"><path d="M0.5 5.2 V0.5 H2.5 V3" fill="none" stroke="#000" stroke-width="1.05"/><path d="M4.5 0 V4.5 H2.5 V3.6" fill="none" stroke="#000" stroke-width="1.05"/></svg></div>
<div style="left:819px;top:409px;width:2.4px;height:1px;background:#000"></div>
<div style="left:835px;top:407px;width:6px;height:5px;"><svg width="6" height="6" style="position:absolute;left:0;top:0"><path d="M0.5 5.2 V0.5 H2.5 V3" fill="none" stroke="#000" stroke-width="1.05"/><path d="M4.5 0 V4.5 H2.5 V3.6" fill="none" stroke="#000" stroke-width="1.05"/></svg></div>
<div style="left:907px;top:409px;width:2.4px;height:1px;background:#000"></div>
<div style="left:925px;top:407px;width:6px;height:5px;background:#000"><div style="left:2px;top:3px;width:2px;height:1px;background:#c4d79b"></div></div>
<div style="left:992px;top:409px;width:3px;height:1px;background:#000"></div>
<div style="left:1004px;top:403px;white-space:nowrap;direction:rtl;width:176px;text-align:center;font-size:10px;line-height:13px;font-weight:bold">-</div>
<div style="left:29px;top:415px;width:886px;height:14px;background:#e4dfec"></div>
<div style="left:915px;top:415px;width:89px;height:14px;background:#c4d79b"></div>
<div style="left:1004px;top:415px;width:176px;height:14px;background:#fcf2d4"></div>
<div style="left:43px;top:421px;width:6px;height:5px;"><svg width="6" height="6" style="position:absolute;left:0;top:0"><path d="M0.5 5.2 V0.5 H2.5 V3" fill="none" stroke="#000" stroke-width="1.05"/><path d="M4.5 0 V4.5 H2.5 V3.6" fill="none" stroke="#000" stroke-width="1.05"/></svg></div>
<div style="left:115px;top:423px;width:2.4px;height:1px;background:#000"></div>
<div style="left:131px;top:421px;width:6px;height:5px;"><svg width="6" height="6" style="position:absolute;left:0;top:0"><path d="M0.5 5.2 V0.5 H2.5 V3" fill="none" stroke="#000" stroke-width="1.05"/><path d="M4.5 0 V4.5 H2.5 V3.6" fill="none" stroke="#000" stroke-width="1.05"/></svg></div>
<div style="left:203px;top:423px;width:2.4px;height:1px;background:#000"></div>
<div style="left:219px;top:421px;width:6px;height:5px;"><svg width="6" height="6" style="position:absolute;left:0;top:0"><path d="M0.5 5.2 V0.5 H2.5 V3" fill="none" stroke="#000" stroke-width="1.05"/><path d="M4.5 0 V4.5 H2.5 V3.6" fill="none" stroke="#000" stroke-width="1.05"/></svg></div>
<div style="left:291px;top:423px;width:2.4px;height:1px;background:#000"></div>
<div style="left:307px;top:421px;width:6px;height:5px;"><svg width="6" height="6" style="position:absolute;left:0;top:0"><path d="M0.5 5.2 V0.5 H2.5 V3" fill="none" stroke="#000" stroke-width="1.05"/><path d="M4.5 0 V4.5 H2.5 V3.6" fill="none" stroke="#000" stroke-width="1.05"/></svg></div>
<div style="left:379px;top:423px;width:2.4px;height:1px;background:#000"></div>
<div style="left:395px;top:421px;width:6px;height:5px;"><svg width="6" height="6" style="position:absolute;left:0;top:0"><path d="M0.5 5.2 V0.5 H2.5 V3" fill="none" stroke="#000" stroke-width="1.05"/><path d="M4.5 0 V4.5 H2.5 V3.6" fill="none" stroke="#000" stroke-width="1.05"/></svg></div>
<div style="left:467px;top:423px;width:2.4px;height:1px;background:#000"></div>
<div style="left:483px;top:421px;width:6px;height:5px;"><svg width="6" height="6" style="position:absolute;left:0;top:0"><path d="M0.5 5.2 V0.5 H2.5 V3" fill="none" stroke="#000" stroke-width="1.05"/><path d="M4.5 0 V4.5 H2.5 V3.6" fill="none" stroke="#000" stroke-width="1.05"/></svg></div>
<div style="left:555px;top:423px;width:2.4px;height:1px;background:#000"></div>
<div style="left:571px;top:421px;width:6px;height:5px;"><svg width="6" height="6" style="position:absolute;left:0;top:0"><path d="M0.5 5.2 V0.5 H2.5 V3" fill="none" stroke="#000" stroke-width="1.05"/><path d="M4.5 0 V4.5 H2.5 V3.6" fill="none" stroke="#000" stroke-width="1.05"/></svg></div>
<div style="left:643px;top:423px;width:2.4px;height:1px;background:#000"></div>
<div style="left:659px;top:421px;width:6px;height:5px;"><svg width="6" height="6" style="position:absolute;left:0;top:0"><path d="M0.5 5.2 V0.5 H2.5 V3" fill="none" stroke="#000" stroke-width="1.05"/><path d="M4.5 0 V4.5 H2.5 V3.6" fill="none" stroke="#000" stroke-width="1.05"/></svg></div>
<div style="left:731px;top:423px;width:2.4px;height:1px;background:#000"></div>
<div style="left:747px;top:421px;width:6px;height:5px;"><svg width="6" height="6" style="position:absolute;left:0;top:0"><path d="M0.5 5.2 V0.5 H2.5 V3" fill="none" stroke="#000" stroke-width="1.05"/><path d="M4.5 0 V4.5 H2.5 V3.6" fill="none" stroke="#000" stroke-width="1.05"/></svg></div>
<div style="left:819px;top:423px;width:2.4px;height:1px;background:#000"></div>
<div style="left:835px;top:421px;width:6px;height:5px;"><svg width="6" height="6" style="position:absolute;left:0;top:0"><path d="M0.5 5.2 V0.5 H2.5 V3" fill="none" stroke="#000" stroke-width="1.05"/><path d="M4.5 0 V4.5 H2.5 V3.6" fill="none" stroke="#000" stroke-width="1.05"/></svg></div>
<div style="left:907px;top:423px;width:2.4px;height:1px;background:#000"></div>
<div style="left:925px;top:421px;width:6px;height:5px;background:#000"><div style="left:2px;top:3px;width:2px;height:1px;background:#c4d79b"></div></div>
<div style="left:992px;top:423px;width:3px;height:1px;background:#000"></div>
<div style="left:1004px;top:417px;white-space:nowrap;direction:rtl;width:176px;text-align:center;font-size:10px;line-height:13px;font-weight:bold">-</div>
<div style="left:29px;top:429px;width:886px;height:14px;background:#ccc0da"></div>
<div style="left:915px;top:429px;width:89px;height:14px;background:#c4d79b"></div>
<div style="left:1004px;top:429px;width:176px;height:14px;background:#fcd5b4"></div>
<div style="left:43px;top:435px;width:6px;height:5px;"><svg width="6" height="6" style="position:absolute;left:0;top:0"><path d="M0.5 5.2 V0.5 H2.5 V3" fill="none" stroke="#000" stroke-width="1.05"/><path d="M4.5 0 V4.5 H2.5 V3.6" fill="none" stroke="#000" stroke-width="1.05"/></svg></div>
<div style="left:115px;top:437px;width:2.4px;height:1px;background:#000"></div>
<div style="left:131px;top:435px;width:6px;height:5px;"><svg width="6" height="6" style="position:absolute;left:0;top:0"><path d="M0.5 5.2 V0.5 H2.5 V3" fill="none" stroke="#000" stroke-width="1.05"/><path d="M4.5 0 V4.5 H2.5 V3.6" fill="none" stroke="#000" stroke-width="1.05"/></svg></div>
<div style="left:203px;top:437px;width:2.4px;height:1px;background:#000"></div>
<div style="left:219px;top:435px;width:6px;height:5px;"><svg width="6" height="6" style="position:absolute;left:0;top:0"><path d="M0.5 5.2 V0.5 H2.5 V3" fill="none" stroke="#000" stroke-width="1.05"/><path d="M4.5 0 V4.5 H2.5 V3.6" fill="none" stroke="#000" stroke-width="1.05"/></svg></div>
<div style="left:291px;top:437px;width:2.4px;height:1px;background:#000"></div>
<div style="left:307px;top:435px;width:6px;height:5px;"><svg width="6" height="6" style="position:absolute;left:0;top:0"><path d="M0.5 5.2 V0.5 H2.5 V3" fill="none" stroke="#000" stroke-width="1.05"/><path d="M4.5 0 V4.5 H2.5 V3.6" fill="none" stroke="#000" stroke-width="1.05"/></svg></div>
<div style="left:379px;top:437px;width:2.4px;height:1px;background:#000"></div>
<div style="left:395px;top:435px;width:6px;height:5px;"><svg width="6" height="6" style="position:absolute;left:0;top:0"><path d="M0.5 5.2 V0.5 H2.5 V3" fill="none" stroke="#000" stroke-width="1.05"/><path d="M4.5 0 V4.5 H2.5 V3.6" fill="none" stroke="#000" stroke-width="1.05"/></svg></div>
<div style="left:467px;top:437px;width:2.4px;height:1px;background:#000"></div>
<div style="left:483px;top:435px;width:6px;height:5px;"><svg width="6" height="6" style="position:absolute;left:0;top:0"><path d="M0.5 5.2 V0.5 H2.5 V3" fill="none" stroke="#000" stroke-width="1.05"/><path d="M4.5 0 V4.5 H2.5 V3.6" fill="none" stroke="#000" stroke-width="1.05"/></svg></div>
<div style="left:555px;top:437px;width:2.4px;height:1px;background:#000"></div>
<div style="left:571px;top:435px;width:6px;height:5px;"><svg width="6" height="6" style="position:absolute;left:0;top:0"><path d="M0.5 5.2 V0.5 H2.5 V3" fill="none" stroke="#000" stroke-width="1.05"/><path d="M4.5 0 V4.5 H2.5 V3.6" fill="none" stroke="#000" stroke-width="1.05"/></svg></div>
<div style="left:643px;top:437px;width:2.4px;height:1px;background:#000"></div>
<div style="left:659px;top:435px;width:6px;height:5px;"><svg width="6" height="6" style="position:absolute;left:0;top:0"><path d="M0.5 5.2 V0.5 H2.5 V3" fill="none" stroke="#000" stroke-width="1.05"/><path d="M4.5 0 V4.5 H2.5 V3.6" fill="none" stroke="#000" stroke-width="1.05"/></svg></div>
<div style="left:731px;top:437px;width:2.4px;height:1px;background:#000"></div>
<div style="left:747px;top:435px;width:6px;height:5px;"><svg width="6" height="6" style="position:absolute;left:0;top:0"><path d="M0.5 5.2 V0.5 H2.5 V3" fill="none" stroke="#000" stroke-width="1.05"/><path d="M4.5 0 V4.5 H2.5 V3.6" fill="none" stroke="#000" stroke-width="1.05"/></svg></div>
<div style="left:819px;top:437px;width:2.4px;height:1px;background:#000"></div>
<div style="left:835px;top:435px;width:6px;height:5px;"><svg width="6" height="6" style="position:absolute;left:0;top:0"><path d="M0.5 5.2 V0.5 H2.5 V3" fill="none" stroke="#000" stroke-width="1.05"/><path d="M4.5 0 V4.5 H2.5 V3.6" fill="none" stroke="#000" stroke-width="1.05"/></svg></div>
<div style="left:907px;top:437px;width:2.4px;height:1px;background:#000"></div>
<div style="left:925px;top:435px;width:6px;height:5px;background:#000"><div style="left:2px;top:3px;width:2px;height:1px;background:#c4d79b"></div></div>
<div style="left:992px;top:437px;width:3px;height:1px;background:#000"></div>
<div style="left:1004px;top:431px;white-space:nowrap;direction:rtl;width:176px;text-align:center;font-size:10px;line-height:13px;font-weight:bold">ביטוח בריאות משלים (קופ"ח)</div>
<div style="left:29px;top:443px;width:886px;height:14px;background:#ccc0da"></div>
<div style="left:915px;top:443px;width:89px;height:14px;background:#c4d79b"></div>
<div style="left:1004px;top:443px;width:176px;height:14px;background:#fcd5b4"></div>
<div style="left:43px;top:449px;width:6px;height:5px;"><svg width="6" height="6" style="position:absolute;left:0;top:0"><path d="M0.5 5.2 V0.5 H2.5 V3" fill="none" stroke="#000" stroke-width="1.05"/><path d="M4.5 0 V4.5 H2.5 V3.6" fill="none" stroke="#000" stroke-width="1.05"/></svg></div>
<div style="left:115px;top:451px;width:2.4px;height:1px;background:#000"></div>
<div style="left:131px;top:449px;width:6px;height:5px;"><svg width="6" height="6" style="position:absolute;left:0;top:0"><path d="M0.5 5.2 V0.5 H2.5 V3" fill="none" stroke="#000" stroke-width="1.05"/><path d="M4.5 0 V4.5 H2.5 V3.6" fill="none" stroke="#000" stroke-width="1.05"/></svg></div>
<div style="left:203px;top:451px;width:2.4px;height:1px;background:#000"></div>
<div style="left:219px;top:449px;width:6px;height:5px;"><svg width="6" height="6" style="position:absolute;left:0;top:0"><path d="M0.5 5.2 V0.5 H2.5 V3" fill="none" stroke="#000" stroke-width="1.05"/><path d="M4.5 0 V4.5 H2.5 V3.6" fill="none" stroke="#000" stroke-width="1.05"/></svg></div>
<div style="left:291px;top:451px;width:2.4px;height:1px;background:#000"></div>
<div style="left:307px;top:449px;width:6px;height:5px;"><svg width="6" height="6" style="position:absolute;left:0;top:0"><path d="M0.5 5.2 V0.5 H2.5 V3" fill="none" stroke="#000" stroke-width="1.05"/><path d="M4.5 0 V4.5 H2.5 V3.6" fill="none" stroke="#000" stroke-width="1.05"/></svg></div>
<div style="left:379px;top:451px;width:2.4px;height:1px;background:#000"></div>
<div style="left:395px;top:449px;width:6px;height:5px;"><svg width="6" height="6" style="position:absolute;left:0;top:0"><path d="M0.5 5.2 V0.5 H2.5 V3" fill="none" stroke="#000" stroke-width="1.05"/><path d="M4.5 0 V4.5 H2.5 V3.6" fill="none" stroke="#000" stroke-width="1.05"/></svg></div>
<div style="left:467px;top:451px;width:2.4px;height:1px;background:#000"></div>
<div style="left:483px;top:449px;width:6px;height:5px;"><svg width="6" height="6" style="position:absolute;left:0;top:0"><path d="M0.5 5.2 V0.5 H2.5 V3" fill="none" stroke="#000" stroke-width="1.05"/><path d="M4.5 0 V4.5 H2.5 V3.6" fill="none" stroke="#000" stroke-width="1.05"/></svg></div>
<div style="left:555px;top:451px;width:2.4px;height:1px;background:#000"></div>
<div style="left:571px;top:449px;width:6px;height:5px;"><svg width="6" height="6" style="position:absolute;left:0;top:0"><path d="M0.5 5.2 V0.5 H2.5 V3" fill="none" stroke="#000" stroke-width="1.05"/><path d="M4.5 0 V4.5 H2.5 V3.6" fill="none" stroke="#000" stroke-width="1.05"/></svg></div>
<div style="left:643px;top:451px;width:2.4px;height:1px;background:#000"></div>
<div style="left:659px;top:449px;width:6px;height:5px;"><svg width="6" height="6" style="position:absolute;left:0;top:0"><path d="M0.5 5.2 V0.5 H2.5 V3" fill="none" stroke="#000" stroke-width="1.05"/><path d="M4.5 0 V4.5 H2.5 V3.6" fill="none" stroke="#000" stroke-width="1.05"/></svg></div>
<div style="left:731px;top:451px;width:2.4px;height:1px;background:#000"></div>
<div style="left:747px;top:449px;width:6px;height:5px;"><svg width="6" height="6" style="position:absolute;left:0;top:0"><path d="M0.5 5.2 V0.5 H2.5 V3" fill="none" stroke="#000" stroke-width="1.05"/><path d="M4.5 0 V4.5 H2.5 V3.6" fill="none" stroke="#000" stroke-width="1.05"/></svg></div>
<div style="left:819px;top:451px;width:2.4px;height:1px;background:#000"></div>
<div style="left:835px;top:449px;width:6px;height:5px;"><svg width="6" height="6" style="position:absolute;left:0;top:0"><path d="M0.5 5.2 V0.5 H2.5 V3" fill="none" stroke="#000" stroke-width="1.05"/><path d="M4.5 0 V4.5 H2.5 V3.6" fill="none" stroke="#000" stroke-width="1.05"/></svg></div>
<div style="left:907px;top:451px;width:2.4px;height:1px;background:#000"></div>
<div style="left:925px;top:449px;width:6px;height:5px;background:#000"><div style="left:2px;top:3px;width:2px;height:1px;background:#c4d79b"></div></div>
<div style="left:992px;top:451px;width:3px;height:1px;background:#000"></div>
<div style="left:1004px;top:445px;white-space:nowrap;direction:rtl;width:176px;text-align:center;font-size:10px;line-height:13px;font-weight:bold">ביטוח בריאות + תאונות</div>
<div style="left:29px;top:457px;width:886px;height:14px;background:#ccc0da"></div>
<div style="left:915px;top:457px;width:89px;height:14px;background:#c4d79b"></div>
<div style="left:1004px;top:457px;width:176px;height:14px;background:#fcd5b4"></div>
<div style="left:43px;top:463px;width:6px;height:5px;"><svg width="6" height="6" style="position:absolute;left:0;top:0"><path d="M0.5 5.2 V0.5 H2.5 V3" fill="none" stroke="#000" stroke-width="1.05"/><path d="M4.5 0 V4.5 H2.5 V3.6" fill="none" stroke="#000" stroke-width="1.05"/></svg></div>
<div style="left:115px;top:465px;width:2.4px;height:1px;background:#000"></div>
<div style="left:131px;top:463px;width:6px;height:5px;"><svg width="6" height="6" style="position:absolute;left:0;top:0"><path d="M0.5 5.2 V0.5 H2.5 V3" fill="none" stroke="#000" stroke-width="1.05"/><path d="M4.5 0 V4.5 H2.5 V3.6" fill="none" stroke="#000" stroke-width="1.05"/></svg></div>
<div style="left:203px;top:465px;width:2.4px;height:1px;background:#000"></div>
<div style="left:219px;top:463px;width:6px;height:5px;"><svg width="6" height="6" style="position:absolute;left:0;top:0"><path d="M0.5 5.2 V0.5 H2.5 V3" fill="none" stroke="#000" stroke-width="1.05"/><path d="M4.5 0 V4.5 H2.5 V3.6" fill="none" stroke="#000" stroke-width="1.05"/></svg></div>
<div style="left:291px;top:465px;width:2.4px;height:1px;background:#000"></div>
<div style="left:307px;top:463px;width:6px;height:5px;"><svg width="6" height="6" style="position:absolute;left:0;top:0"><path d="M0.5 5.2 V0.5 H2.5 V3" fill="none" stroke="#000" stroke-width="1.05"/><path d="M4.5 0 V4.5 H2.5 V3.6" fill="none" stroke="#000" stroke-width="1.05"/></svg></div>
<div style="left:379px;top:465px;width:2.4px;height:1px;background:#000"></div>
<div style="left:395px;top:463px;width:6px;height:5px;"><svg width="6" height="6" style="position:absolute;left:0;top:0"><path d="M0.5 5.2 V0.5 H2.5 V3" fill="none" stroke="#000" stroke-width="1.05"/><path d="M4.5 0 V4.5 H2.5 V3.6" fill="none" stroke="#000" stroke-width="1.05"/></svg></div>
<div style="left:467px;top:465px;width:2.4px;height:1px;background:#000"></div>
<div style="left:483px;top:463px;width:6px;height:5px;"><svg width="6" height="6" style="position:absolute;left:0;top:0"><path d="M0.5 5.2 V0.5 H2.5 V3" fill="none" stroke="#000" stroke-width="1.05"/><path d="M4.5 0 V4.5 H2.5 V3.6" fill="none" stroke="#000" stroke-width="1.05"/></svg></div>
<div style="left:555px;top:465px;width:2.4px;height:1px;background:#000"></div>
<div style="left:571px;top:463px;width:6px;height:5px;"><svg width="6" height="6" style="position:absolute;left:0;top:0"><path d="M0.5 5.2 V0.5 H2.5 V3" fill="none" stroke="#000" stroke-width="1.05"/><path d="M4.5 0 V4.5 H2.5 V3.6" fill="none" stroke="#000" stroke-width="1.05"/></svg></div>
<div style="left:643px;top:465px;width:2.4px;height:1px;background:#000"></div>
<div style="left:659px;top:463px;width:6px;height:5px;"><svg width="6" height="6" style="position:absolute;left:0;top:0"><path d="M0.5 5.2 V0.5 H2.5 V3" fill="none" stroke="#000" stroke-width="1.05"/><path d="M4.5 0 V4.5 H2.5 V3.6" fill="none" stroke="#000" stroke-width="1.05"/></svg></div>
<div style="left:731px;top:465px;width:2.4px;height:1px;background:#000"></div>
<div style="left:747px;top:463px;width:6px;height:5px;"><svg width="6" height="6" style="position:absolute;left:0;top:0"><path d="M0.5 5.2 V0.5 H2.5 V3" fill="none" stroke="#000" stroke-width="1.05"/><path d="M4.5 0 V4.5 H2.5 V3.6" fill="none" stroke="#000" stroke-width="1.05"/></svg></div>
<div style="left:819px;top:465px;width:2.4px;height:1px;background:#000"></div>
<div style="left:835px;top:463px;width:6px;height:5px;"><svg width="6" height="6" style="position:absolute;left:0;top:0"><path d="M0.5 5.2 V0.5 H2.5 V3" fill="none" stroke="#000" stroke-width="1.05"/><path d="M4.5 0 V4.5 H2.5 V3.6" fill="none" stroke="#000" stroke-width="1.05"/></svg></div>
<div style="left:907px;top:465px;width:2.4px;height:1px;background:#000"></div>
<div style="left:925px;top:463px;width:6px;height:5px;background:#000"><div style="left:2px;top:3px;width:2px;height:1px;background:#c4d79b"></div></div>
<div style="left:992px;top:465px;width:3px;height:1px;background:#000"></div>
<div style="left:1004px;top:459px;white-space:nowrap;direction:rtl;width:176px;text-align:center;font-size:10px;line-height:13px;font-weight:bold">ביטוח סיעודי</div>
<div style="left:29px;top:471px;width:886px;height:14px;background:#ccc0da"></div>
<div style="left:915px;top:471px;width:89px;height:14px;background:#c4d79b"></div>
<div style="left:1004px;top:471px;width:176px;height:14px;background:#fcd5b4"></div>
<div style="left:43px;top:477px;width:6px;height:5px;"><svg width="6" height="6" style="position:absolute;left:0;top:0"><path d="M0.5 5.2 V0.5 H2.5 V3" fill="none" stroke="#000" stroke-width="1.05"/><path d="M4.5 0 V4.5 H2.5 V3.6" fill="none" stroke="#000" stroke-width="1.05"/></svg></div>
<div style="left:115px;top:479px;width:2.4px;height:1px;background:#000"></div>
<div style="left:131px;top:477px;width:6px;height:5px;"><svg width="6" height="6" style="position:absolute;left:0;top:0"><path d="M0.5 5.2 V0.5 H2.5 V3" fill="none" stroke="#000" stroke-width="1.05"/><path d="M4.5 0 V4.5 H2.5 V3.6" fill="none" stroke="#000" stroke-width="1.05"/></svg></div>
<div style="left:203px;top:479px;width:2.4px;height:1px;background:#000"></div>
<div style="left:219px;top:477px;width:6px;height:5px;"><svg width="6" height="6" style="position:absolute;left:0;top:0"><path d="M0.5 5.2 V0.5 H2.5 V3" fill="none" stroke="#000" stroke-width="1.05"/><path d="M4.5 0 V4.5 H2.5 V3.6" fill="none" stroke="#000" stroke-width="1.05"/></svg></div>
<div style="left:291px;top:479px;width:2.4px;height:1px;background:#000"></div>
<div style="left:307px;top:477px;width:6px;height:5px;"><svg width="6" height="6" style="position:absolute;left:0;top:0"><path d="M0.5 5.2 V0.5 H2.5 V3" fill="none" stroke="#000" stroke-width="1.05"/><path d="M4.5 0 V4.5 H2.5 V3.6" fill="none" stroke="#000" stroke-width="1.05"/></svg></div>
<div style="left:379px;top:479px;width:2.4px;height:1px;background:#000"></div>
<div style="left:395px;top:477px;width:6px;height:5px;"><svg width="6" height="6" style="position:absolute;left:0;top:0"><path d="M0.5 5.2 V0.5 H2.5 V3" fill="none" stroke="#000" stroke-width="1.05"/><path d="M4.5 0 V4.5 H2.5 V3.6" fill="none" stroke="#000" stroke-width="1.05"/></svg></div>
<div style="left:467px;top:479px;width:2.4px;height:1px;background:#000"></div>
<div style="left:483px;top:477px;width:6px;height:5px;"><svg width="6" height="6" style="position:absolute;left:0;top:0"><path d="M0.5 5.2 V0.5 H2.5 V3" fill="none" stroke="#000" stroke-width="1.05"/><path d="M4.5 0 V4.5 H2.5 V3.6" fill="none" stroke="#000" stroke-width="1.05"/></svg></div>
<div style="left:555px;top:479px;width:2.4px;height:1px;background:#000"></div>
<div style="left:571px;top:477px;width:6px;height:5px;"><svg width="6" height="6" style="position:absolute;left:0;top:0"><path d="M0.5 5.2 V0.5 H2.5 V3" fill="none" stroke="#000" stroke-width="1.05"/><path d="M4.5 0 V4.5 H2.5 V3.6" fill="none" stroke="#000" stroke-width="1.05"/></svg></div>
<div style="left:643px;top:479px;width:2.4px;height:1px;background:#000"></div>
<div style="left:659px;top:477px;width:6px;height:5px;"><svg width="6" height="6" style="position:absolute;left:0;top:0"><path d="M0.5 5.2 V0.5 H2.5 V3" fill="none" stroke="#000" stroke-width="1.05"/><path d="M4.5 0 V4.5 H2.5 V3.6" fill="none" stroke="#000" stroke-width="1.05"/></svg></div>
<div style="left:731px;top:479px;width:2.4px;height:1px;background:#000"></div>
<div style="left:747px;top:477px;width:6px;height:5px;"><svg width="6" height="6" style="position:absolute;left:0;top:0"><path d="M0.5 5.2 V0.5 H2.5 V3" fill="none" stroke="#000" stroke-width="1.05"/><path d="M4.5 0 V4.5 H2.5 V3.6" fill="none" stroke="#000" stroke-width="1.05"/></svg></div>
<div style="left:819px;top:479px;width:2.4px;height:1px;background:#000"></div>
<div style="left:835px;top:477px;width:6px;height:5px;"><svg width="6" height="6" style="position:absolute;left:0;top:0"><path d="M0.5 5.2 V0.5 H2.5 V3" fill="none" stroke="#000" stroke-width="1.05"/><path d="M4.5 0 V4.5 H2.5 V3.6" fill="none" stroke="#000" stroke-width="1.05"/></svg></div>
<div style="left:907px;top:479px;width:2.4px;height:1px;background:#000"></div>
<div style="left:925px;top:477px;width:6px;height:5px;background:#000"><div style="left:2px;top:3px;width:2px;height:1px;background:#c4d79b"></div></div>
<div style="left:992px;top:479px;width:3px;height:1px;background:#000"></div>
<div style="left:1004px;top:473px;white-space:nowrap;direction:rtl;width:176px;text-align:center;font-size:10px;line-height:13px;font-weight:bold">ביטוח חיים</div>
<div style="left:29px;top:485px;width:886px;height:14px;background:#ccc0da"></div>
<div style="left:915px;top:485px;width:89px;height:14px;background:#c4d79b"></div>
<div style="left:1004px;top:485px;width:176px;height:14px;background:#fcd5b4"></div>
<div style="left:43px;top:491px;width:6px;height:5px;"><svg width="6" height="6" style="position:absolute;left:0;top:0"><path d="M0.5 5.2 V0.5 H2.5 V3" fill="none" stroke="#000" stroke-width="1.05"/><path d="M4.5 0 V4.5 H2.5 V3.6" fill="none" stroke="#000" stroke-width="1.05"/></svg></div>
<div style="left:115px;top:493px;width:2.4px;height:1px;background:#000"></div>
<div style="left:131px;top:491px;width:6px;height:5px;"><svg width="6" height="6" style="position:absolute;left:0;top:0"><path d="M0.5 5.2 V0.5 H2.5 V3" fill="none" stroke="#000" stroke-width="1.05"/><path d="M4.5 0 V4.5 H2.5 V3.6" fill="none" stroke="#000" stroke-width="1.05"/></svg></div>
<div style="left:203px;top:493px;width:2.4px;height:1px;background:#000"></div>
<div style="left:219px;top:491px;width:6px;height:5px;"><svg width="6" height="6" style="position:absolute;left:0;top:0"><path d="M0.5 5.2 V0.5 H2.5 V3" fill="none" stroke="#000" stroke-width="1.05"/><path d="M4.5 0 V4.5 H2.5 V3.6" fill="none" stroke="#000" stroke-width="1.05"/></svg></div>
<div style="left:291px;top:493px;width:2.4px;height:1px;background:#000"></div>
<div style="left:307px;top:491px;width:6px;height:5px;"><svg width="6" height="6" style="position:absolute;left:0;top:0"><path d="M0.5 5.2 V0.5 H2.5 V3" fill="none" stroke="#000" stroke-width="1.05"/><path d="M4.5 0 V4.5 H2.5 V3.6" fill="none" stroke="#000" stroke-width="1.05"/></svg></div>
<div style="left:379px;top:493px;width:2.4px;height:1px;background:#000"></div>
<div style="left:395px;top:491px;width:6px;height:5px;"><svg width="6" height="6" style="position:absolute;left:0;top:0"><path d="M0.5 5.2 V0.5 H2.5 V3" fill="none" stroke="#000" stroke-width="1.05"/><path d="M4.5 0 V4.5 H2.5 V3.6" fill="none" stroke="#000" stroke-width="1.05"/></svg></div>
<div style="left:467px;top:493px;width:2.4px;height:1px;background:#000"></div>
<div style="left:483px;top:491px;width:6px;height:5px;"><svg width="6" height="6" style="position:absolute;left:0;top:0"><path d="M0.5 5.2 V0.5 H2.5 V3" fill="none" stroke="#000" stroke-width="1.05"/><path d="M4.5 0 V4.5 H2.5 V3.6" fill="none" stroke="#000" stroke-width="1.05"/></svg></div>
<div style="left:555px;top:493px;width:2.4px;height:1px;background:#000"></div>
<div style="left:571px;top:491px;width:6px;height:5px;"><svg width="6" height="6" style="position:absolute;left:0;top:0"><path d="M0.5 5.2 V0.5 H2.5 V3" fill="none" stroke="#000" stroke-width="1.05"/><path d="M4.5 0 V4.5 H2.5 V3.6" fill="none" stroke="#000" stroke-width="1.05"/></svg></div>
<div style="left:643px;top:493px;width:2.4px;height:1px;background:#000"></div>
<div style="left:659px;top:491px;width:6px;height:5px;"><svg width="6" height="6" style="position:absolute;left:0;top:0"><path d="M0.5 5.2 V0.5 H2.5 V3" fill="none" stroke="#000" stroke-width="1.05"/><path d="M4.5 0 V4.5 H2.5 V3.6" fill="none" stroke="#000" stroke-width="1.05"/></svg></div>
<div style="left:731px;top:493px;width:2.4px;height:1px;background:#000"></div>
<div style="left:747px;top:491px;width:6px;height:5px;"><svg width="6" height="6" style="position:absolute;left:0;top:0"><path d="M0.5 5.2 V0.5 H2.5 V3" fill="none" stroke="#000" stroke-width="1.05"/><path d="M4.5 0 V4.5 H2.5 V3.6" fill="none" stroke="#000" stroke-width="1.05"/></svg></div>
<div style="left:819px;top:493px;width:2.4px;height:1px;background:#000"></div>
<div style="left:835px;top:491px;width:6px;height:5px;"><svg width="6" height="6" style="position:absolute;left:0;top:0"><path d="M0.5 5.2 V0.5 H2.5 V3" fill="none" stroke="#000" stroke-width="1.05"/><path d="M4.5 0 V4.5 H2.5 V3.6" fill="none" stroke="#000" stroke-width="1.05"/></svg></div>
<div style="left:907px;top:493px;width:2.4px;height:1px;background:#000"></div>
<div style="left:925px;top:491px;width:6px;height:5px;background:#000"><div style="left:2px;top:3px;width:2px;height:1px;background:#c4d79b"></div></div>
<div style="left:992px;top:493px;width:3px;height:1px;background:#000"></div>
<div style="left:1004px;top:487px;white-space:nowrap;direction:rtl;width:176px;text-align:center;font-size:10px;line-height:13px;font-weight:bold">ביטוח שיניים</div>
<div style="left:29px;top:499px;width:886px;height:15px;background:#ccc0da"></div>
<div style="left:915px;top:499px;width:89px;height:15px;background:#c4d79b"></div>
<div style="left:1004px;top:499px;width:176px;height:15px;background:#fcd5b4"></div>
<div style="left:43px;top:505px;width:6px;height:5px;"><svg width="6" height="6" style="position:absolute;left:0;top:0"><path d="M0.5 5.2 V0.5 H2.5 V3" fill="none" stroke="#000" stroke-width="1.05"/><path d="M4.5 0 V4.5 H2.5 V3.6" fill="none" stroke="#000" stroke-width="1.05"/></svg></div>
<div style="left:115px;top:507px;width:2.4px;height:1px;background:#000"></div>
<div style="left:131px;top:505px;width:6px;height:5px;"><svg width="6" height="6" style="position:absolute;left:0;top:0"><path d="M0.5 5.2 V0.5 H2.5 V3" fill="none" stroke="#000" stroke-width="1.05"/><path d="M4.5 0 V4.5 H2.5 V3.6" fill="none" stroke="#000" stroke-width="1.05"/></svg></div>
<div style="left:203px;top:507px;width:2.4px;height:1px;background:#000"></div>
<div style="left:219px;top:505px;width:6px;height:5px;"><svg width="6" height="6" style="position:absolute;left:0;top:0"><path d="M0.5 5.2 V0.5 H2.5 V3" fill="none" stroke="#000" stroke-width="1.05"/><path d="M4.5 0 V4.5 H2.5 V3.6" fill="none" stroke="#000" stroke-width="1.05"/></svg></div>
<div style="left:291px;top:507px;width:2.4px;height:1px;background:#000"></div>
<div style="left:307px;top:505px;width:6px;height:5px;"><svg width="6" height="6" style="position:absolute;left:0;top:0"><path d="M0.5 5.2 V0.5 H2.5 V3" fill="none" stroke="#000" stroke-width="1.05"/><path d="M4.5 0 V4.5 H2.5 V3.6" fill="none" stroke="#000" stroke-width="1.05"/></svg></div>
<div style="left:379px;top:507px;width:2.4px;height:1px;background:#000"></div>
<div style="left:395px;top:505px;width:6px;height:5px;"><svg width="6" height="6" style="position:absolute;left:0;top:0"><path d="M0.5 5.2 V0.5 H2.5 V3" fill="none" stroke="#000" stroke-width="1.05"/><path d="M4.5 0 V4.5 H2.5 V3.6" fill="none" stroke="#000" stroke-width="1.05"/></svg></div>
<div style="left:467px;top:507px;width:2.4px;height:1px;background:#000"></div>
<div style="left:483px;top:505px;width:6px;height:5px;"><svg width="6" height="6" style="position:absolute;left:0;top:0"><path d="M0.5 5.2 V0.5 H2.5 V3" fill="none" stroke="#000" stroke-width="1.05"/><path d="M4.5 0 V4.5 H2.5 V3.6" fill="none" stroke="#000" stroke-width="1.05"/></svg></div>
<div style="left:555px;top:507px;width:2.4px;height:1px;background:#000"></div>
<div style="left:571px;top:505px;width:6px;height:5px;"><svg width="6" height="6" style="position:absolute;left:0;top:0"><path d="M0.5 5.2 V0.5 H2.5 V3" fill="none" stroke="#000" stroke-width="1.05"/><path d="M4.5 0 V4.5 H2.5 V3.6" fill="none" stroke="#000" stroke-width="1.05"/></svg></div>
<div style="left:643px;top:507px;width:2.4px;height:1px;background:#000"></div>
<div style="left:659px;top:505px;width:6px;height:5px;"><svg width="6" height="6" style="position:absolute;left:0;top:0"><path d="M0.5 5.2 V0.5 H2.5 V3" fill="none" stroke="#000" stroke-width="1.05"/><path d="M4.5 0 V4.5 H2.5 V3.6" fill="none" stroke="#000" stroke-width="1.05"/></svg></div>
<div style="left:731px;top:507px;width:2.4px;height:1px;background:#000"></div>
<div style="left:747px;top:505px;width:6px;height:5px;"><svg width="6" height="6" style="position:absolute;left:0;top:0"><path d="M0.5 5.2 V0.5 H2.5 V3" fill="none" stroke="#000" stroke-width="1.05"/><path d="M4.5 0 V4.5 H2.5 V3.6" fill="none" stroke="#000" stroke-width="1.05"/></svg></div>
<div style="left:819px;top:507px;width:2.4px;height:1px;background:#000"></div>
<div style="left:835px;top:505px;width:6px;height:5px;"><svg width="6" height="6" style="position:absolute;left:0;top:0"><path d="M0.5 5.2 V0.5 H2.5 V3" fill="none" stroke="#000" stroke-width="1.05"/><path d="M4.5 0 V4.5 H2.5 V3.6" fill="none" stroke="#000" stroke-width="1.05"/></svg></div>
<div style="left:907px;top:507px;width:2.4px;height:1px;background:#000"></div>
<div style="left:925px;top:505px;width:6px;height:5px;background:#000"><div style="left:2px;top:3px;width:2px;height:1px;background:#c4d79b"></div></div>
<div style="left:992px;top:507px;width:3px;height:1px;background:#000"></div>
<div style="left:1004px;top:501px;white-space:nowrap;direction:rtl;width:176px;text-align:center;font-size:10px;line-height:13px;font-weight:bold">ביטוח דירה</div>
<div style="left:29px;top:514px;width:886px;height:14px;background:#ccc0da"></div>
<div style="left:915px;top:514px;width:89px;height:14px;background:#c4d79b"></div>
<div style="left:1004px;top:514px;width:176px;height:14px;background:#fcd5b4"></div>
<div style="left:43px;top:520px;width:6px;height:5px;"><svg width="6" height="6" style="position:absolute;left:0;top:0"><path d="M0.5 5.2 V0.5 H2.5 V3" fill="none" stroke="#000" stroke-width="1.05"/><path d="M4.5 0 V4.5 H2.5 V3.6" fill="none" stroke="#000" stroke-width="1.05"/></svg></div>
<div style="left:115px;top:522px;width:2.4px;height:1px;background:#000"></div>
<div style="left:131px;top:520px;width:6px;height:5px;"><svg width="6" height="6" style="position:absolute;left:0;top:0"><path d="M0.5 5.2 V0.5 H2.5 V3" fill="none" stroke="#000" stroke-width="1.05"/><path d="M4.5 0 V4.5 H2.5 V3.6" fill="none" stroke="#000" stroke-width="1.05"/></svg></div>
<div style="left:203px;top:522px;width:2.4px;height:1px;background:#000"></div>
<div style="left:219px;top:520px;width:6px;height:5px;"><svg width="6" height="6" style="position:absolute;left:0;top:0"><path d="M0.5 5.2 V0.5 H2.5 V3" fill="none" stroke="#000" stroke-width="1.05"/><path d="M4.5 0 V4.5 H2.5 V3.6" fill="none" stroke="#000" stroke-width="1.05"/></svg></div>
<div style="left:291px;top:522px;width:2.4px;height:1px;background:#000"></div>
<div style="left:307px;top:520px;width:6px;height:5px;"><svg width="6" height="6" style="position:absolute;left:0;top:0"><path d="M0.5 5.2 V0.5 H2.5 V3" fill="none" stroke="#000" stroke-width="1.05"/><path d="M4.5 0 V4.5 H2.5 V3.6" fill="none" stroke="#000" stroke-width="1.05"/></svg></div>
<div style="left:379px;top:522px;width:2.4px;height:1px;background:#000"></div>
<div style="left:395px;top:520px;width:6px;height:5px;"><svg width="6" height="6" style="position:absolute;left:0;top:0"><path d="M0.5 5.2 V0.5 H2.5 V3" fill="none" stroke="#000" stroke-width="1.05"/><path d="M4.5 0 V4.5 H2.5 V3.6" fill="none" stroke="#000" stroke-width="1.05"/></svg></div>
<div style="left:467px;top:522px;width:2.4px;height:1px;background:#000"></div>
<div style="left:483px;top:520px;width:6px;height:5px;"><svg width="6" height="6" style="position:absolute;left:0;top:0"><path d="M0.5 5.2 V0.5 H2.5 V3" fill="none" stroke="#000" stroke-width="1.05"/><path d="M4.5 0 V4.5 H2.5 V3.6" fill="none" stroke="#000" stroke-width="1.05"/></svg></div>
<div style="left:555px;top:522px;width:2.4px;height:1px;background:#000"></div>
<div style="left:571px;top:520px;width:6px;height:5px;"><svg width="6" height="6" style="position:absolute;left:0;top:0"><path d="M0.5 5.2 V0.5 H2.5 V3" fill="none" stroke="#000" stroke-width="1.05"/><path d="M4.5 0 V4.5 H2.5 V3.6" fill="none" stroke="#000" stroke-width="1.05"/></svg></div>
<div style="left:643px;top:522px;width:2.4px;height:1px;background:#000"></div>
<div style="left:659px;top:520px;width:6px;height:5px;"><svg width="6" height="6" style="position:absolute;left:0;top:0"><path d="M0.5 5.2 V0.5 H2.5 V3" fill="none" stroke="#000" stroke-width="1.05"/><path d="M4.5 0 V4.5 H2.5 V3.6" fill="none" stroke="#000" stroke-width="1.05"/></svg></div>
<div style="left:731px;top:522px;width:2.4px;height:1px;background:#000"></div>
<div style="left:747px;top:520px;width:6px;height:5px;"><svg width="6" height="6" style="position:absolute;left:0;top:0"><path d="M0.5 5.2 V0.5 H2.5 V3" fill="none" stroke="#000" stroke-width="1.05"/><path d="M4.5 0 V4.5 H2.5 V3.6" fill="none" stroke="#000" stroke-width="1.05"/></svg></div>
<div style="left:819px;top:522px;width:2.4px;height:1px;background:#000"></div>
<div style="left:835px;top:520px;width:6px;height:5px;"><svg width="6" height="6" style="position:absolute;left:0;top:0"><path d="M0.5 5.2 V0.5 H2.5 V3" fill="none" stroke="#000" stroke-width="1.05"/><path d="M4.5 0 V4.5 H2.5 V3.6" fill="none" stroke="#000" stroke-width="1.05"/></svg></div>
<div style="left:907px;top:522px;width:2.4px;height:1px;background:#000"></div>
<div style="left:925px;top:520px;width:6px;height:5px;background:#000"><div style="left:2px;top:3px;width:2px;height:1px;background:#c4d79b"></div></div>
<div style="left:992px;top:522px;width:3px;height:1px;background:#000"></div>
<div style="left:1004px;top:516px;white-space:nowrap;direction:rtl;width:176px;text-align:center;font-size:10px;line-height:13px;font-weight:bold">ביטוח אישי</div>
<div style="left:29px;top:528px;width:886px;height:14px;background:#ccc0da"></div>
<div style="left:915px;top:528px;width:89px;height:14px;background:#c4d79b"></div>
<div style="left:1004px;top:528px;width:176px;height:14px;background:#fcd5b4"></div>
<div style="left:43px;top:534px;width:6px;height:5px;"><svg width="6" height="6" style="position:absolute;left:0;top:0"><path d="M0.5 5.2 V0.5 H2.5 V3" fill="none" stroke="#000" stroke-width="1.05"/><path d="M4.5 0 V4.5 H2.5 V3.6" fill="none" stroke="#000" stroke-width="1.05"/></svg></div>
<div style="left:115px;top:536px;width:2.4px;height:1px;background:#000"></div>
<div style="left:131px;top:534px;width:6px;height:5px;"><svg width="6" height="6" style="position:absolute;left:0;top:0"><path d="M0.5 5.2 V0.5 H2.5 V3" fill="none" stroke="#000" stroke-width="1.05"/><path d="M4.5 0 V4.5 H2.5 V3.6" fill="none" stroke="#000" stroke-width="1.05"/></svg></div>
<div style="left:203px;top:536px;width:2.4px;height:1px;background:#000"></div>
<div style="left:219px;top:534px;width:6px;height:5px;"><svg width="6" height="6" style="position:absolute;left:0;top:0"><path d="M0.5 5.2 V0.5 H2.5 V3" fill="none" stroke="#000" stroke-width="1.05"/><path d="M4.5 0 V4.5 H2.5 V3.6" fill="none" stroke="#000" stroke-width="1.05"/></svg></div>
<div style="left:291px;top:536px;width:2.4px;height:1px;background:#000"></div>
<div style="left:307px;top:534px;width:6px;height:5px;"><svg width="6" height="6" style="position:absolute;left:0;top:0"><path d="M0.5 5.2 V0.5 H2.5 V3" fill="none" stroke="#000" stroke-width="1.05"/><path d="M4.5 0 V4.5 H2.5 V3.6" fill="none" stroke="#000" stroke-width="1.05"/></svg></div>
<div style="left:379px;top:536px;width:2.4px;height:1px;background:#000"></div>
<div style="left:395px;top:534px;width:6px;height:5px;"><svg width="6" height="6" style="position:absolute;left:0;top:0"><path d="M0.5 5.2 V0.5 H2.5 V3" fill="none" stroke="#000" stroke-width="1.05"/><path d="M4.5 0 V4.5 H2.5 V3.6" fill="none" stroke="#000" stroke-width="1.05"/></svg></div>
<div style="left:467px;top:536px;width:2.4px;height:1px;background:#000"></div>
<div style="left:483px;top:534px;width:6px;height:5px;"><svg width="6" height="6" style="position:absolute;left:0;top:0"><path d="M0.5 5.2 V0.5 H2.5 V3" fill="none" stroke="#000" stroke-width="1.05"/><path d="M4.5 0 V4.5 H2.5 V3.6" fill="none" stroke="#000" stroke-width="1.05"/></svg></div>
<div style="left:555px;top:536px;width:2.4px;height:1px;background:#000"></div>
<div style="left:571px;top:534px;width:6px;height:5px;"><svg width="6" height="6" style="position:absolute;left:0;top:0"><path d="M0.5 5.2 V0.5 H2.5 V3" fill="none" stroke="#000" stroke-width="1.05"/><path d="M4.5 0 V4.5 H2.5 V3.6" fill="none" stroke="#000" stroke-width="1.05"/></svg></div>
<div style="left:643px;top:536px;width:2.4px;height:1px;background:#000"></div>
<div style="left:659px;top:534px;width:6px;height:5px;"><svg width="6" height="6" style="position:absolute;left:0;top:0"><path d="M0.5 5.2 V0.5 H2.5 V3" fill="none" stroke="#000" stroke-width="1.05"/><path d="M4.5 0 V4.5 H2.5 V3.6" fill="none" stroke="#000" stroke-width="1.05"/></svg></div>
<div style="left:731px;top:536px;width:2.4px;height:1px;background:#000"></div>
<div style="left:747px;top:534px;width:6px;height:5px;"><svg width="6" height="6" style="position:absolute;left:0;top:0"><path d="M0.5 5.2 V0.5 H2.5 V3" fill="none" stroke="#000" stroke-width="1.05"/><path d="M4.5 0 V4.5 H2.5 V3.6" fill="none" stroke="#000" stroke-width="1.05"/></svg></div>
<div style="left:819px;top:536px;width:2.4px;height:1px;background:#000"></div>
<div style="left:835px;top:534px;width:6px;height:5px;"><svg width="6" height="6" style="position:absolute;left:0;top:0"><path d="M0.5 5.2 V0.5 H2.5 V3" fill="none" stroke="#000" stroke-width="1.05"/><path d="M4.5 0 V4.5 H2.5 V3.6" fill="none" stroke="#000" stroke-width="1.05"/></svg></div>
<div style="left:907px;top:536px;width:2.4px;height:1px;background:#000"></div>
<div style="left:925px;top:534px;width:6px;height:5px;background:#000"><div style="left:2px;top:3px;width:2px;height:1px;background:#c4d79b"></div></div>
<div style="left:992px;top:536px;width:3px;height:1px;background:#000"></div>
<div style="left:1004px;top:530px;white-space:nowrap;direction:rtl;width:176px;text-align:center;font-size:10px;line-height:13px;font-weight:bold">-</div>
<div style="left:29px;top:542px;width:886px;height:14px;background:#ccc0da"></div>
<div style="left:915px;top:542px;width:89px;height:14px;background:#c4d79b"></div>
<div style="left:1004px;top:542px;width:176px;height:14px;background:#fcd5b4"></div>
<div style="left:43px;top:548px;width:6px;height:5px;"><svg width="6" height="6" style="position:absolute;left:0;top:0"><path d="M0.5 5.2 V0.5 H2.5 V3" fill="none" stroke="#000" stroke-width="1.05"/><path d="M4.5 0 V4.5 H2.5 V3.6" fill="none" stroke="#000" stroke-width="1.05"/></svg></div>
<div style="left:115px;top:550px;width:2.4px;height:1px;background:#000"></div>
<div style="left:131px;top:548px;width:6px;height:5px;"><svg width="6" height="6" style="position:absolute;left:0;top:0"><path d="M0.5 5.2 V0.5 H2.5 V3" fill="none" stroke="#000" stroke-width="1.05"/><path d="M4.5 0 V4.5 H2.5 V3.6" fill="none" stroke="#000" stroke-width="1.05"/></svg></div>
<div style="left:203px;top:550px;width:2.4px;height:1px;background:#000"></div>
<div style="left:219px;top:548px;width:6px;height:5px;"><svg width="6" height="6" style="position:absolute;left:0;top:0"><path d="M0.5 5.2 V0.5 H2.5 V3" fill="none" stroke="#000" stroke-width="1.05"/><path d="M4.5 0 V4.5 H2.5 V3.6" fill="none" stroke="#000" stroke-width="1.05"/></svg></div>
<div style="left:291px;top:550px;width:2.4px;height:1px;background:#000"></div>
<div style="left:307px;top:548px;width:6px;height:5px;"><svg width="6" height="6" style="position:absolute;left:0;top:0"><path d="M0.5 5.2 V0.5 H2.5 V3" fill="none" stroke="#000" stroke-width="1.05"/><path d="M4.5 0 V4.5 H2.5 V3.6" fill="none" stroke="#000" stroke-width="1.05"/></svg></div>
<div style="left:379px;top:550px;width:2.4px;height:1px;background:#000"></div>
<div style="left:395px;top:548px;width:6px;height:5px;"><svg width="6" height="6" style="position:absolute;left:0;top:0"><path d="M0.5 5.2 V0.5 H2.5 V3" fill="none" stroke="#000" stroke-width="1.05"/><path d="M4.5 0 V4.5 H2.5 V3.6" fill="none" stroke="#000" stroke-width="1.05"/></svg></div>
<div style="left:467px;top:550px;width:2.4px;height:1px;background:#000"></div>
<div style="left:483px;top:548px;width:6px;height:5px;"><svg width="6" height="6" style="position:absolute;left:0;top:0"><path d="M0.5 5.2 V0.5 H2.5 V3" fill="none" stroke="#000" stroke-width="1.05"/><path d="M4.5 0 V4.5 H2.5 V3.6" fill="none" stroke="#000" stroke-width="1.05"/></svg></div>
<div style="left:555px;top:550px;width:2.4px;height:1px;background:#000"></div>
<div style="left:571px;top:548px;width:6px;height:5px;"><svg width="6" height="6" style="position:absolute;left:0;top:0"><path d="M0.5 5.2 V0.5 H2.5 V3" fill="none" stroke="#000" stroke-width="1.05"/><path d="M4.5 0 V4.5 H2.5 V3.6" fill="none" stroke="#000" stroke-width="1.05"/></svg></div>
<div style="left:643px;top:550px;width:2.4px;height:1px;background:#000"></div>
<div style="left:659px;top:548px;width:6px;height:5px;"><svg width="6" height="6" style="position:absolute;left:0;top:0"><path d="M0.5 5.2 V0.5 H2.5 V3" fill="none" stroke="#000" stroke-width="1.05"/><path d="M4.5 0 V4.5 H2.5 V3.6" fill="none" stroke="#000" stroke-width="1.05"/></svg></div>
<div style="left:731px;top:550px;width:2.4px;height:1px;background:#000"></div>
<div style="left:747px;top:548px;width:6px;height:5px;"><svg width="6" height="6" style="position:absolute;left:0;top:0"><path d="M0.5 5.2 V0.5 H2.5 V3" fill="none" stroke="#000" stroke-width="1.05"/><path d="M4.5 0 V4.5 H2.5 V3.6" fill="none" stroke="#000" stroke-width="1.05"/></svg></div>
<div style="left:819px;top:550px;width:2.4px;height:1px;background:#000"></div>
<div style="left:835px;top:548px;width:6px;height:5px;"><svg width="6" height="6" style="position:absolute;left:0;top:0"><path d="M0.5 5.2 V0.5 H2.5 V3" fill="none" stroke="#000" stroke-width="1.05"/><path d="M4.5 0 V4.5 H2.5 V3.6" fill="none" stroke="#000" stroke-width="1.05"/></svg></div>
<div style="left:907px;top:550px;width:2.4px;height:1px;background:#000"></div>
<div style="left:925px;top:548px;width:6px;height:5px;background:#000"><div style="left:2px;top:3px;width:2px;height:1px;background:#c4d79b"></div></div>
<div style="left:992px;top:550px;width:3px;height:1px;background:#000"></div>
<div style="left:1004px;top:544px;white-space:nowrap;direction:rtl;width:176px;text-align:center;font-size:10px;line-height:13px;font-weight:bold">-</div>
<div style="left:29px;top:556px;width:886px;height:14px;background:#ccc0da"></div>
<div style="left:915px;top:556px;width:89px;height:14px;background:#c4d79b"></div>
<div style="left:1004px;top:556px;width:176px;height:14px;background:#fcd5b4"></div>
<div style="left:43px;top:562px;width:6px;height:5px;"><svg width="6" height="6" style="position:absolute;left:0;top:0"><path d="M0.5 5.2 V0.5 H2.5 V3" fill="none" stroke="#000" stroke-width="1.05"/><path d="M4.5 0 V4.5 H2.5 V3.6" fill="none" stroke="#000" stroke-width="1.05"/></svg></div>
<div style="left:115px;top:564px;width:2.4px;height:1px;background:#000"></div>
<div style="left:131px;top:562px;width:6px;height:5px;"><svg width="6" height="6" style="position:absolute;left:0;top:0"><path d="M0.5 5.2 V0.5 H2.5 V3" fill="none" stroke="#000" stroke-width="1.05"/><path d="M4.5 0 V4.5 H2.5 V3.6" fill="none" stroke="#000" stroke-width="1.05"/></svg></div>
<div style="left:203px;top:564px;width:2.4px;height:1px;background:#000"></div>
<div style="left:219px;top:562px;width:6px;height:5px;"><svg width="6" height="6" style="position:absolute;left:0;top:0"><path d="M0.5 5.2 V0.5 H2.5 V3" fill="none" stroke="#000" stroke-width="1.05"/><path d="M4.5 0 V4.5 H2.5 V3.6" fill="none" stroke="#000" stroke-width="1.05"/></svg></div>
<div style="left:291px;top:564px;width:2.4px;height:1px;background:#000"></div>
<div style="left:307px;top:562px;width:6px;height:5px;"><svg width="6" height="6" style="position:absolute;left:0;top:0"><path d="M0.5 5.2 V0.5 H2.5 V3" fill="none" stroke="#000" stroke-width="1.05"/><path d="M4.5 0 V4.5 H2.5 V3.6" fill="none" stroke="#000" stroke-width="1.05"/></svg></div>
<div style="left:379px;top:564px;width:2.4px;height:1px;background:#000"></div>
<div style="left:395px;top:562px;width:6px;height:5px;"><svg width="6" height="6" style="position:absolute;left:0;top:0"><path d="M0.5 5.2 V0.5 H2.5 V3" fill="none" stroke="#000" stroke-width="1.05"/><path d="M4.5 0 V4.5 H2.5 V3.6" fill="none" stroke="#000" stroke-width="1.05"/></svg></div>
<div style="left:467px;top:564px;width:2.4px;height:1px;background:#000"></div>
<div style="left:483px;top:562px;width:6px;height:5px;"><svg width="6" height="6" style="position:absolute;left:0;top:0"><path d="M0.5 5.2 V0.5 H2.5 V3" fill="none" stroke="#000" stroke-width="1.05"/><path d="M4.5 0 V4.5 H2.5 V3.6" fill="none" stroke="#000" stroke-width="1.05"/></svg></div>
<div style="left:555px;top:564px;width:2.4px;height:1px;background:#000"></div>
<div style="left:571px;top:562px;width:6px;height:5px;"><svg width="6" height="6" style="position:absolute;left:0;top:0"><path d="M0.5 5.2 V0.5 H2.5 V3" fill="none" stroke="#000" stroke-width="1.05"/><path d="M4.5 0 V4.5 H2.5 V3.6" fill="none" stroke="#000" stroke-width="1.05"/></svg></div>
<div style="left:643px;top:564px;width:2.4px;height:1px;background:#000"></div>
<div style="left:659px;top:562px;width:6px;height:5px;"><svg width="6" height="6" style="position:absolute;left:0;top:0"><path d="M0.5 5.2 V0.5 H2.5 V3" fill="none" stroke="#000" stroke-width="1.05"/><path d="M4.5 0 V4.5 H2.5 V3.6" fill="none" stroke="#000" stroke-width="1.05"/></svg></div>
<div style="left:731px;top:564px;width:2.4px;height:1px;background:#000"></div>
<div style="left:747px;top:562px;width:6px;height:5px;"><svg width="6" height="6" style="position:absolute;left:0;top:0"><path d="M0.5 5.2 V0.5 H2.5 V3" fill="none" stroke="#000" stroke-width="1.05"/><path d="M4.5 0 V4.5 H2.5 V3.6" fill="none" stroke="#000" stroke-width="1.05"/></svg></div>
<div style="left:819px;top:564px;width:2.4px;height:1px;background:#000"></div>
<div style="left:835px;top:562px;width:6px;height:5px;"><svg width="6" height="6" style="position:absolute;left:0;top:0"><path d="M0.5 5.2 V0.5 H2.5 V3" fill="none" stroke="#000" stroke-width="1.05"/><path d="M4.5 0 V4.5 H2.5 V3.6" fill="none" stroke="#000" stroke-width="1.05"/></svg></div>
<div style="left:907px;top:564px;width:2.4px;height:1px;background:#000"></div>
<div style="left:925px;top:562px;width:6px;height:5px;background:#000"><div style="left:2px;top:3px;width:2px;height:1px;background:#c4d79b"></div></div>
<div style="left:992px;top:564px;width:3px;height:1px;background:#000"></div>
<div style="left:1004px;top:558px;white-space:nowrap;direction:rtl;width:176px;text-align:center;font-size:10px;line-height:13px;font-weight:bold">-</div>
<div style="left:29px;top:570px;width:886px;height:14px;background:#e4dfec"></div>
<div style="left:915px;top:570px;width:89px;height:14px;background:#c4d79b"></div>
<div style="left:1004px;top:570px;width:176px;height:14px;background:#fcf2d4"></div>
<div style="left:43px;top:576px;width:6px;height:5px;"><svg width="6" height="6" style="position:absolute;left:0;top:0"><path d="M0.5 5.2 V0.5 H2.5 V3" fill="none" stroke="#000" stroke-width="1.05"/><path d="M4.5 0 V4.5 H2.5 V3.6" fill="none" stroke="#000" stroke-width="1.05"/></svg></div>
<div style="left:115px;top:578px;width:2.4px;height:1px;background:#000"></div>
<div style="left:131px;top:576px;width:6px;height:5px;"><svg width="6" height="6" style="position:absolute;left:0;top:0"><path d="M0.5 5.2 V0.5 H2.5 V3" fill="none" stroke="#000" stroke-width="1.05"/><path d="M4.5 0 V4.5 H2.5 V3.6" fill="none" stroke="#000" stroke-width="1.05"/></svg></div>
<div style="left:203px;top:578px;width:2.4px;height:1px;background:#000"></div>
<div style="left:219px;top:576px;width:6px;height:5px;"><svg width="6" height="6" style="position:absolute;left:0;top:0"><path d="M0.5 5.2 V0.5 H2.5 V3" fill="none" stroke="#000" stroke-width="1.05"/><path d="M4.5 0 V4.5 H2.5 V3.6" fill="none" stroke="#000" stroke-width="1.05"/></svg></div>
<div style="left:291px;top:578px;width:2.4px;height:1px;background:#000"></div>
<div style="left:307px;top:576px;width:6px;height:5px;"><svg width="6" height="6" style="position:absolute;left:0;top:0"><path d="M0.5 5.2 V0.5 H2.5 V3" fill="none" stroke="#000" stroke-width="1.05"/><path d="M4.5 0 V4.5 H2.5 V3.6" fill="none" stroke="#000" stroke-width="1.05"/></svg></div>
<div style="left:379px;top:578px;width:2.4px;height:1px;background:#000"></div>
<div style="left:395px;top:576px;width:6px;height:5px;"><svg width="6" height="6" style="position:absolute;left:0;top:0"><path d="M0.5 5.2 V0.5 H2.5 V3" fill="none" stroke="#000" stroke-width="1.05"/><path d="M4.5 0 V4.5 H2.5 V3.6" fill="none" stroke="#000" stroke-width="1.05"/></svg></div>
<div style="left:467px;top:578px;width:2.4px;height:1px;background:#000"></div>
<div style="left:483px;top:576px;width:6px;height:5px;"><svg width="6" height="6" style="position:absolute;left:0;top:0"><path d="M0.5 5.2 V0.5 H2.5 V3" fill="none" stroke="#000" stroke-width="1.05"/><path d="M4.5 0 V4.5 H2.5 V3.6" fill="none" stroke="#000" stroke-width="1.05"/></svg></div>
<div style="left:555px;top:578px;width:2.4px;height:1px;background:#000"></div>
<div style="left:571px;top:576px;width:6px;height:5px;"><svg width="6" height="6" style="position:absolute;left:0;top:0"><path d="M0.5 5.2 V0.5 H2.5 V3" fill="none" stroke="#000" stroke-width="1.05"/><path d="M4.5 0 V4.5 H2.5 V3.6" fill="none" stroke="#000" stroke-width="1.05"/></svg></div>
<div style="left:643px;top:578px;width:2.4px;height:1px;background:#000"></div>
<div style="left:659px;top:576px;width:6px;height:5px;"><svg width="6" height="6" style="position:absolute;left:0;top:0"><path d="M0.5 5.2 V0.5 H2.5 V3" fill="none" stroke="#000" stroke-width="1.05"/><path d="M4.5 0 V4.5 H2.5 V3.6" fill="none" stroke="#000" stroke-width="1.05"/></svg></div>
<div style="left:731px;top:578px;width:2.4px;height:1px;background:#000"></div>
<div style="left:747px;top:576px;width:6px;height:5px;"><svg width="6" height="6" style="position:absolute;left:0;top:0"><path d="M0.5 5.2 V0.5 H2.5 V3" fill="none" stroke="#000" stroke-width="1.05"/><path d="M4.5 0 V4.5 H2.5 V3.6" fill="none" stroke="#000" stroke-width="1.05"/></svg></div>
<div style="left:819px;top:578px;width:2.4px;height:1px;background:#000"></div>
<div style="left:835px;top:576px;width:6px;height:5px;"><svg width="6" height="6" style="position:absolute;left:0;top:0"><path d="M0.5 5.2 V0.5 H2.5 V3" fill="none" stroke="#000" stroke-width="1.05"/><path d="M4.5 0 V4.5 H2.5 V3.6" fill="none" stroke="#000" stroke-width="1.05"/></svg></div>
<div style="left:907px;top:578px;width:2.4px;height:1px;background:#000"></div>
<div style="left:925px;top:576px;width:6px;height:5px;background:#000"><div style="left:2px;top:3px;width:2px;height:1px;background:#c4d79b"></div></div>
<div style="left:992px;top:578px;width:3px;height:1px;background:#000"></div>
<div style="left:1004px;top:572px;white-space:nowrap;direction:rtl;width:176px;text-align:center;font-size:10px;line-height:13px;font-weight:bold">מנויים - נטפליקס/ספוטיפיי וכו</div>
<div style="left:29px;top:584px;width:886px;height:14px;background:#e4dfec"></div>
<div style="left:915px;top:584px;width:89px;height:14px;background:#c4d79b"></div>
<div style="left:1004px;top:584px;width:176px;height:14px;background:#fcf2d4"></div>
<div style="left:43px;top:590px;width:6px;height:5px;"><svg width="6" height="6" style="position:absolute;left:0;top:0"><path d="M0.5 5.2 V0.5 H2.5 V3" fill="none" stroke="#000" stroke-width="1.05"/><path d="M4.5 0 V4.5 H2.5 V3.6" fill="none" stroke="#000" stroke-width="1.05"/></svg></div>
<div style="left:115px;top:592px;width:2.4px;height:1px;background:#000"></div>
<div style="left:131px;top:590px;width:6px;height:5px;"><svg width="6" height="6" style="position:absolute;left:0;top:0"><path d="M0.5 5.2 V0.5 H2.5 V3" fill="none" stroke="#000" stroke-width="1.05"/><path d="M4.5 0 V4.5 H2.5 V3.6" fill="none" stroke="#000" stroke-width="1.05"/></svg></div>
<div style="left:203px;top:592px;width:2.4px;height:1px;background:#000"></div>
<div style="left:219px;top:590px;width:6px;height:5px;"><svg width="6" height="6" style="position:absolute;left:0;top:0"><path d="M0.5 5.2 V0.5 H2.5 V3" fill="none" stroke="#000" stroke-width="1.05"/><path d="M4.5 0 V4.5 H2.5 V3.6" fill="none" stroke="#000" stroke-width="1.05"/></svg></div>
<div style="left:291px;top:592px;width:2.4px;height:1px;background:#000"></div>
<div style="left:307px;top:590px;width:6px;height:5px;"><svg width="6" height="6" style="position:absolute;left:0;top:0"><path d="M0.5 5.2 V0.5 H2.5 V3" fill="none" stroke="#000" stroke-width="1.05"/><path d="M4.5 0 V4.5 H2.5 V3.6" fill="none" stroke="#000" stroke-width="1.05"/></svg></div>
<div style="left:379px;top:592px;width:2.4px;height:1px;background:#000"></div>
<div style="left:395px;top:590px;width:6px;height:5px;"><svg width="6" height="6" style="position:absolute;left:0;top:0"><path d="M0.5 5.2 V0.5 H2.5 V3" fill="none" stroke="#000" stroke-width="1.05"/><path d="M4.5 0 V4.5 H2.5 V3.6" fill="none" stroke="#000" stroke-width="1.05"/></svg></div>
<div style="left:467px;top:592px;width:2.4px;height:1px;background:#000"></div>
<div style="left:483px;top:590px;width:6px;height:5px;"><svg width="6" height="6" style="position:absolute;left:0;top:0"><path d="M0.5 5.2 V0.5 H2.5 V3" fill="none" stroke="#000" stroke-width="1.05"/><path d="M4.5 0 V4.5 H2.5 V3.6" fill="none" stroke="#000" stroke-width="1.05"/></svg></div>
<div style="left:555px;top:592px;width:2.4px;height:1px;background:#000"></div>
<div style="left:571px;top:590px;width:6px;height:5px;"><svg width="6" height="6" style="position:absolute;left:0;top:0"><path d="M0.5 5.2 V0.5 H2.5 V3" fill="none" stroke="#000" stroke-width="1.05"/><path d="M4.5 0 V4.5 H2.5 V3.6" fill="none" stroke="#000" stroke-width="1.05"/></svg></div>
<div style="left:643px;top:592px;width:2.4px;height:1px;background:#000"></div>
<div style="left:659px;top:590px;width:6px;height:5px;"><svg width="6" height="6" style="position:absolute;left:0;top:0"><path d="M0.5 5.2 V0.5 H2.5 V3" fill="none" stroke="#000" stroke-width="1.05"/><path d="M4.5 0 V4.5 H2.5 V3.6" fill="none" stroke="#000" stroke-width="1.05"/></svg></div>
<div style="left:731px;top:592px;width:2.4px;height:1px;background:#000"></div>
<div style="left:747px;top:590px;width:6px;height:5px;"><svg width="6" height="6" style="position:absolute;left:0;top:0"><path d="M0.5 5.2 V0.5 H2.5 V3" fill="none" stroke="#000" stroke-width="1.05"/><path d="M4.5 0 V4.5 H2.5 V3.6" fill="none" stroke="#000" stroke-width="1.05"/></svg></div>
<div style="left:819px;top:592px;width:2.4px;height:1px;background:#000"></div>
<div style="left:835px;top:590px;width:6px;height:5px;"><svg width="6" height="6" style="position:absolute;left:0;top:0"><path d="M0.5 5.2 V0.5 H2.5 V3" fill="none" stroke="#000" stroke-width="1.05"/><path d="M4.5 0 V4.5 H2.5 V3.6" fill="none" stroke="#000" stroke-width="1.05"/></svg></div>
<div style="left:907px;top:592px;width:2.4px;height:1px;background:#000"></div>
<div style="left:925px;top:590px;width:6px;height:5px;background:#000"><div style="left:2px;top:3px;width:2px;height:1px;background:#c4d79b"></div></div>
<div style="left:992px;top:592px;width:3px;height:1px;background:#000"></div>
<div style="left:1004px;top:586px;white-space:nowrap;direction:rtl;width:176px;text-align:center;font-size:10px;line-height:13px;font-weight:bold">טלפון קווי + תשתית אינטרנט</div>
<div style="left:29px;top:598px;width:886px;height:14px;background:#e4dfec"></div>
<div style="left:915px;top:598px;width:89px;height:14px;background:#c4d79b"></div>
<div style="left:1004px;top:598px;width:176px;height:14px;background:#fcf2d4"></div>
<div style="left:43px;top:604px;width:6px;height:5px;"><svg width="6" height="6" style="position:absolute;left:0;top:0"><path d="M0.5 5.2 V0.5 H2.5 V3" fill="none" stroke="#000" stroke-width="1.05"/><path d="M4.5 0 V4.5 H2.5 V3.6" fill="none" stroke="#000" stroke-width="1.05"/></svg></div>
<div style="left:115px;top:606px;width:2.4px;height:1px;background:#000"></div>
<div style="left:131px;top:604px;width:6px;height:5px;"><svg width="6" height="6" style="position:absolute;left:0;top:0"><path d="M0.5 5.2 V0.5 H2.5 V3" fill="none" stroke="#000" stroke-width="1.05"/><path d="M4.5 0 V4.5 H2.5 V3.6" fill="none" stroke="#000" stroke-width="1.05"/></svg></div>
<div style="left:203px;top:606px;width:2.4px;height:1px;background:#000"></div>
<div style="left:219px;top:604px;width:6px;height:5px;"><svg width="6" height="6" style="position:absolute;left:0;top:0"><path d="M0.5 5.2 V0.5 H2.5 V3" fill="none" stroke="#000" stroke-width="1.05"/><path d="M4.5 0 V4.5 H2.5 V3.6" fill="none" stroke="#000" stroke-width="1.05"/></svg></div>
<div style="left:291px;top:606px;width:2.4px;height:1px;background:#000"></div>
<div style="left:307px;top:604px;width:6px;height:5px;"><svg width="6" height="6" style="position:absolute;left:0;top:0"><path d="M0.5 5.2 V0.5 H2.5 V3" fill="none" stroke="#000" stroke-width="1.05"/><path d="M4.5 0 V4.5 H2.5 V3.6" fill="none" stroke="#000" stroke-width="1.05"/></svg></div>
<div style="left:379px;top:606px;width:2.4px;height:1px;background:#000"></div>
<div style="left:395px;top:604px;width:6px;height:5px;"><svg width="6" height="6" style="position:absolute;left:0;top:0"><path d="M0.5 5.2 V0.5 H2.5 V3" fill="none" stroke="#000" stroke-width="1.05"/><path d="M4.5 0 V4.5 H2.5 V3.6" fill="none" stroke="#000" stroke-width="1.05"/></svg></div>
<div style="left:467px;top:606px;width:2.4px;height:1px;background:#000"></div>
<div style="left:483px;top:604px;width:6px;height:5px;"><svg width="6" height="6" style="position:absolute;left:0;top:0"><path d="M0.5 5.2 V0.5 H2.5 V3" fill="none" stroke="#000" stroke-width="1.05"/><path d="M4.5 0 V4.5 H2.5 V3.6" fill="none" stroke="#000" stroke-width="1.05"/></svg></div>
<div style="left:555px;top:606px;width:2.4px;height:1px;background:#000"></div>
<div style="left:571px;top:604px;width:6px;height:5px;"><svg width="6" height="6" style="position:absolute;left:0;top:0"><path d="M0.5 5.2 V0.5 H2.5 V3" fill="none" stroke="#000" stroke-width="1.05"/><path d="M4.5 0 V4.5 H2.5 V3.6" fill="none" stroke="#000" stroke-width="1.05"/></svg></div>
<div style="left:643px;top:606px;width:2.4px;height:1px;background:#000"></div>
<div style="left:659px;top:604px;width:6px;height:5px;"><svg width="6" height="6" style="position:absolute;left:0;top:0"><path d="M0.5 5.2 V0.5 H2.5 V3" fill="none" stroke="#000" stroke-width="1.05"/><path d="M4.5 0 V4.5 H2.5 V3.6" fill="none" stroke="#000" stroke-width="1.05"/></svg></div>
<div style="left:731px;top:606px;width:2.4px;height:1px;background:#000"></div>
<div style="left:747px;top:604px;width:6px;height:5px;"><svg width="6" height="6" style="position:absolute;left:0;top:0"><path d="M0.5 5.2 V0.5 H2.5 V3" fill="none" stroke="#000" stroke-width="1.05"/><path d="M4.5 0 V4.5 H2.5 V3.6" fill="none" stroke="#000" stroke-width="1.05"/></svg></div>
<div style="left:819px;top:606px;width:2.4px;height:1px;background:#000"></div>
<div style="left:835px;top:604px;width:6px;height:5px;"><svg width="6" height="6" style="position:absolute;left:0;top:0"><path d="M0.5 5.2 V0.5 H2.5 V3" fill="none" stroke="#000" stroke-width="1.05"/><path d="M4.5 0 V4.5 H2.5 V3.6" fill="none" stroke="#000" stroke-width="1.05"/></svg></div>
<div style="left:907px;top:606px;width:2.4px;height:1px;background:#000"></div>
<div style="left:925px;top:604px;width:6px;height:5px;background:#000"><div style="left:2px;top:3px;width:2px;height:1px;background:#c4d79b"></div></div>
<div style="left:992px;top:606px;width:3px;height:1px;background:#000"></div>
<div style="left:1004px;top:600px;white-space:nowrap;direction:rtl;width:176px;text-align:center;font-size:10px;line-height:13px;font-weight:bold">חשבון סלולרי</div>
<div style="left:29px;top:612px;width:886px;height:15px;background:#e4dfec"></div>
<div style="left:915px;top:612px;width:89px;height:15px;background:#c4d79b"></div>
<div style="left:1004px;top:612px;width:176px;height:15px;background:#fcf2d4"></div>
<div style="left:43px;top:618px;width:6px;height:5px;"><svg width="6" height="6" style="position:absolute;left:0;top:0"><path d="M0.5 5.2 V0.5 H2.5 V3" fill="none" stroke="#000" stroke-width="1.05"/><path d="M4.5 0 V4.5 H2.5 V3.6" fill="none" stroke="#000" stroke-width="1.05"/></svg></div>
<div style="left:115px;top:620px;width:2.4px;height:1px;background:#000"></div>
<div style="left:131px;top:618px;width:6px;height:5px;"><svg width="6" height="6" style="position:absolute;left:0;top:0"><path d="M0.5 5.2 V0.5 H2.5 V3" fill="none" stroke="#000" stroke-width="1.05"/><path d="M4.5 0 V4.5 H2.5 V3.6" fill="none" stroke="#000" stroke-width="1.05"/></svg></div>
<div style="left:203px;top:620px;width:2.4px;height:1px;background:#000"></div>
<div style="left:219px;top:618px;width:6px;height:5px;"><svg width="6" height="6" style="position:absolute;left:0;top:0"><path d="M0.5 5.2 V0.5 H2.5 V3" fill="none" stroke="#000" stroke-width="1.05"/><path d="M4.5 0 V4.5 H2.5 V3.6" fill="none" stroke="#000" stroke-width="1.05"/></svg></div>
<div style="left:291px;top:620px;width:2.4px;height:1px;background:#000"></div>
<div style="left:307px;top:618px;width:6px;height:5px;"><svg width="6" height="6" style="position:absolute;left:0;top:0"><path d="M0.5 5.2 V0.5 H2.5 V3" fill="none" stroke="#000" stroke-width="1.05"/><path d="M4.5 0 V4.5 H2.5 V3.6" fill="none" stroke="#000" stroke-width="1.05"/></svg></div>
<div style="left:379px;top:620px;width:2.4px;height:1px;background:#000"></div>
<div style="left:395px;top:618px;width:6px;height:5px;"><svg width="6" height="6" style="position:absolute;left:0;top:0"><path d="M0.5 5.2 V0.5 H2.5 V3" fill="none" stroke="#000" stroke-width="1.05"/><path d="M4.5 0 V4.5 H2.5 V3.6" fill="none" stroke="#000" stroke-width="1.05"/></svg></div>
<div style="left:467px;top:620px;width:2.4px;height:1px;background:#000"></div>
<div style="left:483px;top:618px;width:6px;height:5px;"><svg width="6" height="6" style="position:absolute;left:0;top:0"><path d="M0.5 5.2 V0.5 H2.5 V3" fill="none" stroke="#000" stroke-width="1.05"/><path d="M4.5 0 V4.5 H2.5 V3.6" fill="none" stroke="#000" stroke-width="1.05"/></svg></div>
<div style="left:555px;top:620px;width:2.4px;height:1px;background:#000"></div>
<div style="left:571px;top:618px;width:6px;height:5px;"><svg width="6" height="6" style="position:absolute;left:0;top:0"><path d="M0.5 5.2 V0.5 H2.5 V3" fill="none" stroke="#000" stroke-width="1.05"/><path d="M4.5 0 V4.5 H2.5 V3.6" fill="none" stroke="#000" stroke-width="1.05"/></svg></div>
<div style="left:643px;top:620px;width:2.4px;height:1px;background:#000"></div>
<div style="left:659px;top:618px;width:6px;height:5px;"><svg width="6" height="6" style="position:absolute;left:0;top:0"><path d="M0.5 5.2 V0.5 H2.5 V3" fill="none" stroke="#000" stroke-width="1.05"/><path d="M4.5 0 V4.5 H2.5 V3.6" fill="none" stroke="#000" stroke-width="1.05"/></svg></div>
<div style="left:731px;top:620px;width:2.4px;height:1px;background:#000"></div>
<div style="left:747px;top:618px;width:6px;height:5px;"><svg width="6" height="6" style="position:absolute;left:0;top:0"><path d="M0.5 5.2 V0.5 H2.5 V3" fill="none" stroke="#000" stroke-width="1.05"/><path d="M4.5 0 V4.5 H2.5 V3.6" fill="none" stroke="#000" stroke-width="1.05"/></svg></div>
<div style="left:819px;top:620px;width:2.4px;height:1px;background:#000"></div>
<div style="left:835px;top:618px;width:6px;height:5px;"><svg width="6" height="6" style="position:absolute;left:0;top:0"><path d="M0.5 5.2 V0.5 H2.5 V3" fill="none" stroke="#000" stroke-width="1.05"/><path d="M4.5 0 V4.5 H2.5 V3.6" fill="none" stroke="#000" stroke-width="1.05"/></svg></div>
<div style="left:907px;top:620px;width:2.4px;height:1px;background:#000"></div>
<div style="left:925px;top:618px;width:6px;height:5px;background:#000"><div style="left:2px;top:3px;width:2px;height:1px;background:#c4d79b"></div></div>
<div style="left:992px;top:620px;width:3px;height:1px;background:#000"></div>
<div style="left:1004px;top:614px;white-space:nowrap;direction:rtl;width:176px;text-align:center;font-size:10px;line-height:13px;font-weight:bold">ספק אינטרנט</div>
<div style="left:29px;top:627px;width:886px;height:14px;background:#e4dfec"></div>
<div style="left:915px;top:627px;width:89px;height:14px;background:#c4d79b"></div>
<div style="left:1004px;top:627px;width:176px;height:14px;background:#fcf2d4"></div>
<div style="left:43px;top:633px;width:6px;height:5px;"><svg width="6" height="6" style="position:absolute;left:0;top:0"><path d="M0.5 5.2 V0.5 H2.5 V3" fill="none" stroke="#000" stroke-width="1.05"/><path d="M4.5 0 V4.5 H2.5 V3.6" fill="none" stroke="#000" stroke-width="1.05"/></svg></div>
<div style="left:115px;top:635px;width:2.4px;height:1px;background:#000"></div>
<div style="left:131px;top:633px;width:6px;height:5px;"><svg width="6" height="6" style="position:absolute;left:0;top:0"><path d="M0.5 5.2 V0.5 H2.5 V3" fill="none" stroke="#000" stroke-width="1.05"/><path d="M4.5 0 V4.5 H2.5 V3.6" fill="none" stroke="#000" stroke-width="1.05"/></svg></div>
<div style="left:203px;top:635px;width:2.4px;height:1px;background:#000"></div>
<div style="left:219px;top:633px;width:6px;height:5px;"><svg width="6" height="6" style="position:absolute;left:0;top:0"><path d="M0.5 5.2 V0.5 H2.5 V3" fill="none" stroke="#000" stroke-width="1.05"/><path d="M4.5 0 V4.5 H2.5 V3.6" fill="none" stroke="#000" stroke-width="1.05"/></svg></div>
<div style="left:291px;top:635px;width:2.4px;height:1px;background:#000"></div>
<div style="left:307px;top:633px;width:6px;height:5px;"><svg width="6" height="6" style="position:absolute;left:0;top:0"><path d="M0.5 5.2 V0.5 H2.5 V3" fill="none" stroke="#000" stroke-width="1.05"/><path d="M4.5 0 V4.5 H2.5 V3.6" fill="none" stroke="#000" stroke-width="1.05"/></svg></div>
<div style="left:379px;top:635px;width:2.4px;height:1px;background:#000"></div>
<div style="left:395px;top:633px;width:6px;height:5px;"><svg width="6" height="6" style="position:absolute;left:0;top:0"><path d="M0.5 5.2 V0.5 H2.5 V3" fill="none" stroke="#000" stroke-width="1.05"/><path d="M4.5 0 V4.5 H2.5 V3.6" fill="none" stroke="#000" stroke-width="1.05"/></svg></div>
<div style="left:467px;top:635px;width:2.4px;height:1px;background:#000"></div>
<div style="left:483px;top:633px;width:6px;height:5px;"><svg width="6" height="6" style="position:absolute;left:0;top:0"><path d="M0.5 5.2 V0.5 H2.5 V3" fill="none" stroke="#000" stroke-width="1.05"/><path d="M4.5 0 V4.5 H2.5 V3.6" fill="none" stroke="#000" stroke-width="1.05"/></svg></div>
<div style="left:555px;top:635px;width:2.4px;height:1px;background:#000"></div>
<div style="left:571px;top:633px;width:6px;height:5px;"><svg width="6" height="6" style="position:absolute;left:0;top:0"><path d="M0.5 5.2 V0.5 H2.5 V3" fill="none" stroke="#000" stroke-width="1.05"/><path d="M4.5 0 V4.5 H2.5 V3.6" fill="none" stroke="#000" stroke-width="1.05"/></svg></div>
<div style="left:643px;top:635px;width:2.4px;height:1px;background:#000"></div>
<div style="left:659px;top:633px;width:6px;height:5px;"><svg width="6" height="6" style="position:absolute;left:0;top:0"><path d="M0.5 5.2 V0.5 H2.5 V3" fill="none" stroke="#000" stroke-width="1.05"/><path d="M4.5 0 V4.5 H2.5 V3.6" fill="none" stroke="#000" stroke-width="1.05"/></svg></div>
<div style="left:731px;top:635px;width:2.4px;height:1px;background:#000"></div>
<div style="left:747px;top:633px;width:6px;height:5px;"><svg width="6" height="6" style="position:absolute;left:0;top:0"><path d="M0.5 5.2 V0.5 H2.5 V3" fill="none" stroke="#000" stroke-width="1.05"/><path d="M4.5 0 V4.5 H2.5 V3.6" fill="none" stroke="#000" stroke-width="1.05"/></svg></div>
<div style="left:819px;top:635px;width:2.4px;height:1px;background:#000"></div>
<div style="left:835px;top:633px;width:6px;height:5px;"><svg width="6" height="6" style="position:absolute;left:0;top:0"><path d="M0.5 5.2 V0.5 H2.5 V3" fill="none" stroke="#000" stroke-width="1.05"/><path d="M4.5 0 V4.5 H2.5 V3.6" fill="none" stroke="#000" stroke-width="1.05"/></svg></div>
<div style="left:907px;top:635px;width:2.4px;height:1px;background:#000"></div>
<div style="left:925px;top:633px;width:6px;height:5px;background:#000"><div style="left:2px;top:3px;width:2px;height:1px;background:#c4d79b"></div></div>
<div style="left:992px;top:635px;width:3px;height:1px;background:#000"></div>
<div style="left:1004px;top:629px;white-space:nowrap;direction:rtl;width:176px;text-align:center;font-size:10px;line-height:13px;font-weight:bold">כבלים</div>
<div style="left:29px;top:641px;width:886px;height:14px;background:#e4dfec"></div>
<div style="left:915px;top:641px;width:89px;height:14px;background:#c4d79b"></div>
<div style="left:1004px;top:641px;width:176px;height:14px;background:#fcf2d4"></div>
<div style="left:43px;top:647px;width:6px;height:5px;"><svg width="6" height="6" style="position:absolute;left:0;top:0"><path d="M0.5 5.2 V0.5 H2.5 V3" fill="none" stroke="#000" stroke-width="1.05"/><path d="M4.5 0 V4.5 H2.5 V3.6" fill="none" stroke="#000" stroke-width="1.05"/></svg></div>
<div style="left:115px;top:649px;width:2.4px;height:1px;background:#000"></div>
<div style="left:131px;top:647px;width:6px;height:5px;"><svg width="6" height="6" style="position:absolute;left:0;top:0"><path d="M0.5 5.2 V0.5 H2.5 V3" fill="none" stroke="#000" stroke-width="1.05"/><path d="M4.5 0 V4.5 H2.5 V3.6" fill="none" stroke="#000" stroke-width="1.05"/></svg></div>
<div style="left:203px;top:649px;width:2.4px;height:1px;background:#000"></div>
<div style="left:219px;top:647px;width:6px;height:5px;"><svg width="6" height="6" style="position:absolute;left:0;top:0"><path d="M0.5 5.2 V0.5 H2.5 V3" fill="none" stroke="#000" stroke-width="1.05"/><path d="M4.5 0 V4.5 H2.5 V3.6" fill="none" stroke="#000" stroke-width="1.05"/></svg></div>
<div style="left:291px;top:649px;width:2.4px;height:1px;background:#000"></div>
<div style="left:307px;top:647px;width:6px;height:5px;"><svg width="6" height="6" style="position:absolute;left:0;top:0"><path d="M0.5 5.2 V0.5 H2.5 V3" fill="none" stroke="#000" stroke-width="1.05"/><path d="M4.5 0 V4.5 H2.5 V3.6" fill="none" stroke="#000" stroke-width="1.05"/></svg></div>
<div style="left:379px;top:649px;width:2.4px;height:1px;background:#000"></div>
<div style="left:395px;top:647px;width:6px;height:5px;"><svg width="6" height="6" style="position:absolute;left:0;top:0"><path d="M0.5 5.2 V0.5 H2.5 V3" fill="none" stroke="#000" stroke-width="1.05"/><path d="M4.5 0 V4.5 H2.5 V3.6" fill="none" stroke="#000" stroke-width="1.05"/></svg></div>
<div style="left:467px;top:649px;width:2.4px;height:1px;background:#000"></div>
<div style="left:483px;top:647px;width:6px;height:5px;"><svg width="6" height="6" style="position:absolute;left:0;top:0"><path d="M0.5 5.2 V0.5 H2.5 V3" fill="none" stroke="#000" stroke-width="1.05"/><path d="M4.5 0 V4.5 H2.5 V3.6" fill="none" stroke="#000" stroke-width="1.05"/></svg></div>
<div style="left:555px;top:649px;width:2.4px;height:1px;background:#000"></div>
<div style="left:571px;top:647px;width:6px;height:5px;"><svg width="6" height="6" style="position:absolute;left:0;top:0"><path d="M0.5 5.2 V0.5 H2.5 V3" fill="none" stroke="#000" stroke-width="1.05"/><path d="M4.5 0 V4.5 H2.5 V3.6" fill="none" stroke="#000" stroke-width="1.05"/></svg></div>
<div style="left:643px;top:649px;width:2.4px;height:1px;background:#000"></div>
<div style="left:659px;top:647px;width:6px;height:5px;"><svg width="6" height="6" style="position:absolute;left:0;top:0"><path d="M0.5 5.2 V0.5 H2.5 V3" fill="none" stroke="#000" stroke-width="1.05"/><path d="M4.5 0 V4.5 H2.5 V3.6" fill="none" stroke="#000" stroke-width="1.05"/></svg></div>
<div style="left:731px;top:649px;width:2.4px;height:1px;background:#000"></div>
<div style="left:747px;top:647px;width:6px;height:5px;"><svg width="6" height="6" style="position:absolute;left:0;top:0"><path d="M0.5 5.2 V0.5 H2.5 V3" fill="none" stroke="#000" stroke-width="1.05"/><path d="M4.5 0 V4.5 H2.5 V3.6" fill="none" stroke="#000" stroke-width="1.05"/></svg></div>
<div style="left:819px;top:649px;width:2.4px;height:1px;background:#000"></div>
<div style="left:835px;top:647px;width:6px;height:5px;"><svg width="6" height="6" style="position:absolute;left:0;top:0"><path d="M0.5 5.2 V0.5 H2.5 V3" fill="none" stroke="#000" stroke-width="1.05"/><path d="M4.5 0 V4.5 H2.5 V3.6" fill="none" stroke="#000" stroke-width="1.05"/></svg></div>
<div style="left:907px;top:649px;width:2.4px;height:1px;background:#000"></div>
<div style="left:925px;top:647px;width:6px;height:5px;background:#000"><div style="left:2px;top:3px;width:2px;height:1px;background:#c4d79b"></div></div>
<div style="left:992px;top:649px;width:3px;height:1px;background:#000"></div>
<div style="left:1004px;top:643px;white-space:nowrap;direction:rtl;width:176px;text-align:center;font-size:10px;line-height:13px;font-weight:bold">-</div>
<div style="left:29px;top:655px;width:886px;height:14px;background:#e4dfec"></div>
<div style="left:915px;top:655px;width:89px;height:14px;background:#c4d79b"></div>
<div style="left:1004px;top:655px;width:176px;height:14px;background:#fcf2d4"></div>
<div style="left:43px;top:661px;width:6px;height:5px;"><svg width="6" height="6" style="position:absolute;left:0;top:0"><path d="M0.5 5.2 V0.5 H2.5 V3" fill="none" stroke="#000" stroke-width="1.05"/><path d="M4.5 0 V4.5 H2.5 V3.6" fill="none" stroke="#000" stroke-width="1.05"/></svg></div>
<div style="left:115px;top:663px;width:2.4px;height:1px;background:#000"></div>
<div style="left:131px;top:661px;width:6px;height:5px;"><svg width="6" height="6" style="position:absolute;left:0;top:0"><path d="M0.5 5.2 V0.5 H2.5 V3" fill="none" stroke="#000" stroke-width="1.05"/><path d="M4.5 0 V4.5 H2.5 V3.6" fill="none" stroke="#000" stroke-width="1.05"/></svg></div>
<div style="left:203px;top:663px;width:2.4px;height:1px;background:#000"></div>
<div style="left:219px;top:661px;width:6px;height:5px;"><svg width="6" height="6" style="position:absolute;left:0;top:0"><path d="M0.5 5.2 V0.5 H2.5 V3" fill="none" stroke="#000" stroke-width="1.05"/><path d="M4.5 0 V4.5 H2.5 V3.6" fill="none" stroke="#000" stroke-width="1.05"/></svg></div>
<div style="left:291px;top:663px;width:2.4px;height:1px;background:#000"></div>
<div style="left:307px;top:661px;width:6px;height:5px;"><svg width="6" height="6" style="position:absolute;left:0;top:0"><path d="M0.5 5.2 V0.5 H2.5 V3" fill="none" stroke="#000" stroke-width="1.05"/><path d="M4.5 0 V4.5 H2.5 V3.6" fill="none" stroke="#000" stroke-width="1.05"/></svg></div>
<div style="left:379px;top:663px;width:2.4px;height:1px;background:#000"></div>
<div style="left:395px;top:661px;width:6px;height:5px;"><svg width="6" height="6" style="position:absolute;left:0;top:0"><path d="M0.5 5.2 V0.5 H2.5 V3" fill="none" stroke="#000" stroke-width="1.05"/><path d="M4.5 0 V4.5 H2.5 V3.6" fill="none" stroke="#000" stroke-width="1.05"/></svg></div>
<div style="left:467px;top:663px;width:2.4px;height:1px;background:#000"></div>
<div style="left:483px;top:661px;width:6px;height:5px;"><svg width="6" height="6" style="position:absolute;left:0;top:0"><path d="M0.5 5.2 V0.5 H2.5 V3" fill="none" stroke="#000" stroke-width="1.05"/><path d="M4.5 0 V4.5 H2.5 V3.6" fill="none" stroke="#000" stroke-width="1.05"/></svg></div>
<div style="left:555px;top:663px;width:2.4px;height:1px;background:#000"></div>
<div style="left:571px;top:661px;width:6px;height:5px;"><svg width="6" height="6" style="position:absolute;left:0;top:0"><path d="M0.5 5.2 V0.5 H2.5 V3" fill="none" stroke="#000" stroke-width="1.05"/><path d="M4.5 0 V4.5 H2.5 V3.6" fill="none" stroke="#000" stroke-width="1.05"/></svg></div>
<div style="left:643px;top:663px;width:2.4px;height:1px;background:#000"></div>
<div style="left:659px;top:661px;width:6px;height:5px;"><svg width="6" height="6" style="position:absolute;left:0;top:0"><path d="M0.5 5.2 V0.5 H2.5 V3" fill="none" stroke="#000" stroke-width="1.05"/><path d="M4.5 0 V4.5 H2.5 V3.6" fill="none" stroke="#000" stroke-width="1.05"/></svg></div>
<div style="left:731px;top:663px;width:2.4px;height:1px;background:#000"></div>
<div style="left:747px;top:661px;width:6px;height:5px;"><svg width="6" height="6" style="position:absolute;left:0;top:0"><path d="M0.5 5.2 V0.5 H2.5 V3" fill="none" stroke="#000" stroke-width="1.05"/><path d="M4.5 0 V4.5 H2.5 V3.6" fill="none" stroke="#000" stroke-width="1.05"/></svg></div>
<div style="left:819px;top:663px;width:2.4px;height:1px;background:#000"></div>
<div style="left:835px;top:661px;width:6px;height:5px;"><svg width="6" height="6" style="position:absolute;left:0;top:0"><path d="M0.5 5.2 V0.5 H2.5 V3" fill="none" stroke="#000" stroke-width="1.05"/><path d="M4.5 0 V4.5 H2.5 V3.6" fill="none" stroke="#000" stroke-width="1.05"/></svg></div>
<div style="left:907px;top:663px;width:2.4px;height:1px;background:#000"></div>
<div style="left:925px;top:661px;width:6px;height:5px;background:#000"><div style="left:2px;top:3px;width:2px;height:1px;background:#c4d79b"></div></div>
<div style="left:992px;top:663px;width:3px;height:1px;background:#000"></div>
<div style="left:1004px;top:657px;white-space:nowrap;direction:rtl;width:176px;text-align:center;font-size:10px;line-height:13px;font-weight:bold">-</div>
<div style="left:29px;top:669px;width:886px;height:17px;background:#ccc0da"></div>
<div style="left:915px;top:669px;width:89px;height:17px;background:#c4d79b"></div>
<div style="left:1004px;top:669px;width:176px;height:17px;background:#fcd5b4"></div>
<div style="left:43px;top:675px;width:6px;height:5px;"><svg width="6" height="6" style="position:absolute;left:0;top:0"><path d="M0.5 5.2 V0.5 H2.5 V3" fill="none" stroke="#000" stroke-width="1.05"/><path d="M4.5 0 V4.5 H2.5 V3.6" fill="none" stroke="#000" stroke-width="1.05"/></svg></div>
<div style="left:115px;top:677px;width:2.4px;height:1px;background:#000"></div>
<div style="left:131px;top:675px;width:6px;height:5px;"><svg width="6" height="6" style="position:absolute;left:0;top:0"><path d="M0.5 5.2 V0.5 H2.5 V3" fill="none" stroke="#000" stroke-width="1.05"/><path d="M4.5 0 V4.5 H2.5 V3.6" fill="none" stroke="#000" stroke-width="1.05"/></svg></div>
<div style="left:203px;top:677px;width:2.4px;height:1px;background:#000"></div>
<div style="left:219px;top:675px;width:6px;height:5px;"><svg width="6" height="6" style="position:absolute;left:0;top:0"><path d="M0.5 5.2 V0.5 H2.5 V3" fill="none" stroke="#000" stroke-width="1.05"/><path d="M4.5 0 V4.5 H2.5 V3.6" fill="none" stroke="#000" stroke-width="1.05"/></svg></div>
<div style="left:291px;top:677px;width:2.4px;height:1px;background:#000"></div>
<div style="left:307px;top:675px;width:6px;height:5px;"><svg width="6" height="6" style="position:absolute;left:0;top:0"><path d="M0.5 5.2 V0.5 H2.5 V3" fill="none" stroke="#000" stroke-width="1.05"/><path d="M4.5 0 V4.5 H2.5 V3.6" fill="none" stroke="#000" stroke-width="1.05"/></svg></div>
<div style="left:379px;top:677px;width:2.4px;height:1px;background:#000"></div>
<div style="left:395px;top:675px;width:6px;height:5px;"><svg width="6" height="6" style="position:absolute;left:0;top:0"><path d="M0.5 5.2 V0.5 H2.5 V3" fill="none" stroke="#000" stroke-width="1.05"/><path d="M4.5 0 V4.5 H2.5 V3.6" fill="none" stroke="#000" stroke-width="1.05"/></svg></div>
<div style="left:467px;top:677px;width:2.4px;height:1px;background:#000"></div>
<div style="left:483px;top:675px;width:6px;height:5px;"><svg width="6" height="6" style="position:absolute;left:0;top:0"><path d="M0.5 5.2 V0.5 H2.5 V3" fill="none" stroke="#000" stroke-width="1.05"/><path d="M4.5 0 V4.5 H2.5 V3.6" fill="none" stroke="#000" stroke-width="1.05"/></svg></div>
<div style="left:555px;top:677px;width:2.4px;height:1px;background:#000"></div>
<div style="left:571px;top:675px;width:6px;height:5px;"><svg width="6" height="6" style="position:absolute;left:0;top:0"><path d="M0.5 5.2 V0.5 H2.5 V3" fill="none" stroke="#000" stroke-width="1.05"/><path d="M4.5 0 V4.5 H2.5 V3.6" fill="none" stroke="#000" stroke-width="1.05"/></svg></div>
<div style="left:643px;top:677px;width:2.4px;height:1px;background:#000"></div>
<div style="left:659px;top:675px;width:6px;height:5px;"><svg width="6" height="6" style="position:absolute;left:0;top:0"><path d="M0.5 5.2 V0.5 H2.5 V3" fill="none" stroke="#000" stroke-width="1.05"/><path d="M4.5 0 V4.5 H2.5 V3.6" fill="none" stroke="#000" stroke-width="1.05"/></svg></div>
<div style="left:731px;top:677px;width:2.4px;height:1px;background:#000"></div>
<div style="left:747px;top:675px;width:6px;height:5px;"><svg width="6" height="6" style="position:absolute;left:0;top:0"><path d="M0.5 5.2 V0.5 H2.5 V3" fill="none" stroke="#000" stroke-width="1.05"/><path d="M4.5 0 V4.5 H2.5 V3.6" fill="none" stroke="#000" stroke-width="1.05"/></svg></div>
<div style="left:819px;top:677px;width:2.4px;height:1px;background:#000"></div>
<div style="left:835px;top:675px;width:6px;height:5px;"><svg width="6" height="6" style="position:absolute;left:0;top:0"><path d="M0.5 5.2 V0.5 H2.5 V3" fill="none" stroke="#000" stroke-width="1.05"/><path d="M4.5 0 V4.5 H2.5 V3.6" fill="none" stroke="#000" stroke-width="1.05"/></svg></div>
<div style="left:907px;top:677px;width:2.4px;height:1px;background:#000"></div>
<div style="left:925px;top:675px;width:6px;height:5px;background:#000"><div style="left:2px;top:3px;width:2px;height:1px;background:#c4d79b"></div></div>
<div style="left:992px;top:677px;width:3px;height:1px;background:#000"></div>
<div style="left:1004px;top:671px;white-space:nowrap;direction:rtl;width:176px;text-align:center;font-size:10px;line-height:13px;font-weight:bold">קופות גמל</div>
<div style="left:1181px;top:315px;width:86px;height:113px;background:#fcf2d4"></div>
<div style="left:1181px;top:430px;width:86px;height:139px;background:#fcd5b4"></div>
<div style="left:1181px;top:571px;width:86px;height:97px;background:#fcf2d4"></div>
<div style="left:1181px;top:670px;width:86px;height:16px;background:#fcd5b4"></div>
<div style="left:1180px;top:367px;white-space:nowrap;direction:rtl;width:88px;text-align:center;font-size:11px;line-height:13px;font-weight:bold">דיור</div>
<div style="left:1180px;top:486px;white-space:nowrap;direction:rtl;width:88px;text-align:center;font-size:11px;line-height:13px;font-weight:bold">הגנה כלכלית</div>
<div style="left:1180px;top:503px;white-space:nowrap;direction:rtl;width:88px;text-align:center;font-size:11px;line-height:13px;font-weight:bold">(ביטוחים)</div>
<div style="left:1180px;top:614px;white-space:nowrap;direction:rtl;width:88px;text-align:center;font-size:11px;line-height:13px;font-weight:bold">תקשורת</div>
<div style="left:1269px;top:316px;width:58px;height:370px;background:#fcf2d4"></div>
<div style="left:1268px;top:536px;white-space:nowrap;direction:rtl;width:59px;text-align:center;font-size:11px;line-height:13px;font-weight:bold">הוצאות</div>
<div style="left:1268px;top:553px;white-space:nowrap;direction:rtl;width:59px;text-align:center;font-size:11px;line-height:13px;font-weight:bold">קבועות</div>
<div style="left:29px;top:146px;width:601px;height:2px;background:#000"></div>
<div style="left:29px;top:256px;width:601px;height:2px;background:#000"></div>
<div style="left:628px;top:146px;width:2px;height:112px;background:#000"></div>
<div style="left:651px;top:146px;width:617px;height:2px;background:#000"></div>
<div style="left:651px;top:235px;width:617px;height:2px;background:#000"></div>
<div style="left:651px;top:146px;width:2px;height:91px;background:#000"></div>
<div style="left:1267px;top:146px;width:2px;height:91px;background:#000"></div>
<div style="left:29px;top:263px;width:1240px;height:2px;background:#000"></div>
<div style="left:1267px;top:263px;width:2px;height:53px;background:#000"></div>
<div style="left:29px;top:281px;width:976px;height:2px;background:#000"></div>
<div style="left:29px;top:330px;width:1152px;height:1px;background:#000"></div>
<div style="left:29px;top:344px;width:1152px;height:1px;background:#000"></div>
<div style="left:29px;top:358px;width:1152px;height:1px;background:#000"></div>
<div style="left:29px;top:372px;width:1152px;height:1px;background:#000"></div>
<div style="left:29px;top:386px;width:1152px;height:1px;background:#000"></div>
<div style="left:29px;top:401px;width:1152px;height:1px;background:#000"></div>
<div style="left:29px;top:415px;width:1152px;height:1px;background:#000"></div>
<div style="left:29px;top:428px;width:1152px;height:2px;background:#000"></div>
<div style="left:29px;top:443px;width:1152px;height:1px;background:#000"></div>
<div style="left:29px;top:457px;width:1152px;height:1px;background:#000"></div>
<div style="left:29px;top:471px;width:1152px;height:1px;background:#000"></div>
<div style="left:29px;top:485px;width:1152px;height:1px;background:#000"></div>
<div style="left:29px;top:499px;width:1152px;height:1px;background:#000"></div>
<div style="left:29px;top:514px;width:1152px;height:1px;background:#000"></div>
<div style="left:29px;top:528px;width:1152px;height:1px;background:#000"></div>
<div style="left:29px;top:542px;width:1152px;height:1px;background:#000"></div>
<div style="left:29px;top:556px;width:1152px;height:1px;background:#000"></div>
<div style="left:29px;top:569px;width:1152px;height:2px;background:#000"></div>
<div style="left:29px;top:584px;width:1152px;height:1px;background:#000"></div>
<div style="left:29px;top:598px;width:1152px;height:1px;background:#000"></div>
<div style="left:29px;top:612px;width:1152px;height:1px;background:#000"></div>
<div style="left:29px;top:627px;width:1152px;height:1px;background:#000"></div>
<div style="left:29px;top:641px;width:1152px;height:1px;background:#000"></div>
<div style="left:29px;top:655px;width:1152px;height:1px;background:#000"></div>
<div style="left:29px;top:668px;width:1152px;height:2px;background:#000"></div>
<div style="left:29px;top:314px;width:1239px;height:1px;background:#000"></div>
<div style="left:29px;top:316px;width:1239px;height:1px;background:#000"></div>
<div style="left:29px;top:684px;width:1152px;height:1px;background:#000"></div>
<div style="left:1179px;top:428px;width:89px;height:2px;background:#000"></div>
<div style="left:1179px;top:569px;width:89px;height:2px;background:#000"></div>
<div style="left:1179px;top:668px;width:89px;height:2px;background:#000"></div>
<div style="left:1267px;top:314px;width:62px;height:2px;background:#000"></div>
<div style="left:35px;top:281px;width:1px;height:405px;background:#000"></div>
<div style="left:123px;top:281px;width:1px;height:405px;background:#000"></div>
<div style="left:211px;top:281px;width:1px;height:405px;background:#000"></div>
<div style="left:299px;top:281px;width:1px;height:405px;background:#000"></div>
<div style="left:387px;top:281px;width:1px;height:405px;background:#000"></div>
<div style="left:475px;top:281px;width:1px;height:405px;background:#000"></div>
<div style="left:563px;top:281px;width:1px;height:405px;background:#000"></div>
<div style="left:651px;top:281px;width:1px;height:405px;background:#000"></div>
<div style="left:739px;top:281px;width:1px;height:405px;background:#000"></div>
<div style="left:827px;top:281px;width:1px;height:405px;background:#000"></div>
<div style="left:914px;top:281px;width:1px;height:405px;background:#000"></div>
<div style="left:916px;top:281px;width:1px;height:405px;background:#000"></div>
<div style="left:1002px;top:281px;width:1px;height:405px;background:#000"></div>
<div style="left:1004px;top:281px;width:1px;height:405px;background:#000"></div>
<div style="left:1179px;top:314px;width:2px;height:372px;background:#000"></div>
<div style="left:1267px;top:314px;width:2px;height:372px;background:#000"></div>
<div style="left:1327px;top:314px;width:2px;height:372px;background:#000"></div>
<div style="left:915px;top:283px;width:1px;height:403px;background:#e9e4f0"></div>
<div style="left:1003px;top:283px;width:1px;height:403px;background:#c4d79b"></div>
<div style="left:8px;top:686px;width:1366px;height:28px;background:#e6e6e6"></div>
<div style="left:29px;top:686px;width:1345px;height:1px;background:#c4c4c4"></div>
<div style="left:29px;top:693px;width:15px;height:15px;background:#fff;border:1px solid #8a8a8a"></div>
<svg style="position:absolute;left:32px;top:695px" width="9" height="11"><path d="M6.5 1.5 L2 5.5 L6.5 9.5 Z" fill="#222"/></svg>
<div style="left:44px;top:693px;width:138px;height:15px;background:#f0f0f0;border-top:1px solid #d0d0d0;border-bottom:1px solid #d0d0d0"></div>
<div style="left:182px;top:693px;width:384px;height:15px;background:#fff;border:1px solid #8a8a8a"></div>
<div style="left:566px;top:693px;width:15px;height:15px;background:#fff;border:1px solid #8a8a8a"></div>
<svg style="position:absolute;left:569px;top:695px" width="9" height="11"><path d="M2.5 1.5 L7 5.5 L2.5 9.5 Z" fill="#222"/></svg>
<div style="left:596px;top:695px;width:2px;height:2px;background:#a0a0a0;border-radius:1px"></div>
<div style="left:596px;top:699px;width:2px;height:2px;background:#a0a0a0;border-radius:1px"></div>
<div style="left:596px;top:703px;width:2px;height:2px;background:#a0a0a0;border-radius:1px"></div>
<svg style="position:absolute;left:615px;top:691px" width="18" height="18"><circle cx="9" cy="9" r="7.5" fill="none" stroke="#b8b8b8" stroke-width="1.2"/><path d="M9 5 V13 M5 9 H13" stroke="#b8b8b8" stroke-width="1.3"/></svg>
<div style="left:647px;top:692px;white-space:nowrap;color:#217346;font-size:13px;line-height:15px;font-weight:bold">...</div>
<div style="left:666px;top:691px;width:111px;height:20px;overflow:hidden"><div style="right:0;top:2px;white-space:nowrap;direction:rtl;color:#333;font-size:13.6px;line-height:16px">גליון ריק - לשימושכו</div></div>
<div style="left:795px;top:691px;width:1px;height:18px;background:#a0a0a0"></div>
<div style="left:799px;top:689px;width:88px;height:22px;background:#d9b3e6"></div>
<div style="left:799px;top:692px;white-space:nowrap;direction:rtl;width:88px;text-align:center;color:#222;font-size:13.7px;line-height:16px">מיפוי חבות</div>
<div style="left:888px;top:691px;width:1px;height:18px;background:#a0a0a0"></div>
<div style="left:892px;top:689px;width:88px;height:22px;background:#60497a"></div>
<div style="left:892px;top:692px;white-space:nowrap;direction:rtl;width:88px;text-align:center;color:#f0ecf4;font-size:13.3px;line-height:16px">מעקב מזומן</div>
<div style="left:981px;top:686px;width:134px;height:25px;background:linear-gradient(#ffffff 40%,#fdeee2);border-left:1px solid #c8c8c8;border-right:1px solid #c8c8c8"></div>
<div style="left:981px;top:709px;width:134px;height:2px;background:#217346"></div>
<div style="left:981px;top:692px;white-space:nowrap;direction:rtl;width:134px;text-align:center;color:#217346;font-size:13.4px;line-height:16px;font-weight:bold">מעקב חודשי-שנתי</div>
<div style="left:1118px;top:689px;width:154px;height:22px;background:#e6b8b7"></div>
<div style="left:1118px;top:692px;white-space:nowrap;direction:rtl;width:154px;text-align:center;color:#222;font-size:13.4px;line-height:16px">רישום הכנסות-הוצאות</div>
<div style="left:1274px;top:691px;width:1px;height:18px;background:#a0a0a0"></div>
<div style="left:1282px;top:692px;white-space:nowrap;color:#217346;font-size:13px;line-height:15px;font-weight:bold">...</div>
<svg style="position:absolute;left:1310px;top:694px" width="40" height="12"><path d="M7.5 2 L2.5 6 L7.5 10 Z" fill="#217346"/><path d="M32 2 L37 6 L32 10 Z" fill="#217346"/></svg>
<div style="left:8px;top:714px;width:1366px;height:22px;background:#f3f3f3;border-top:1px solid #d6d6d6"></div>
<div style="left:15px;top:718px;white-space:nowrap;color:#444;font-size:11.3px;line-height:14px">Ready</div>
<div style="left:65px;top:718px;white-space:nowrap;color:#444;font-size:11.3px;line-height:14px">Scroll Lock</div>
<svg style="position:absolute;left:130px;top:714px" width="60" height="22" viewBox="130 714 60 22">
<g fill="none" stroke="#3c3c3c" stroke-width="1.05">
<path d="M140.5 730.5 H136.6 V719.6 H149.5 V723.5"/><line x1="136.6" y1="721.3" x2="149.5" y2="721.3"/>
<path d="M138.2 723.4 H140.8 M138.2 725.4 H140.3 M138.2 727.3 H140.3"/>
<circle cx="145.5" cy="727.3" r="3.7"/>
</g><circle cx="145.5" cy="727.3" r="1.7" fill="#3c3c3c"/>
<g fill="none" stroke="#3c3c3c" stroke-width="1.05">
<circle cx="173.9" cy="719.6" r="1.5"/>
<path d="M168.6 721.6 C169.5 723 171.5 723.2 172.3 723.2 C172.3 726 171.4 728.5 170.7 730.6 C170.9 731.6 172 731.4 172.4 730.6 L173.8 727.6"/>
<path d="M179.6 721.6 C178.7 723 176.8 723.2 175.6 723.2 V725.2"/>
<path d="M175.8 725.4 L181.8 731.6 M181.8 725.4 L175.8 731.6"/>
</g></svg>
<div style="left:186px;top:718px;white-space:nowrap;color:#444;font-size:11.3px;line-height:14px">Accessibility: Investigate</div>
<div style="left:1080px;top:715px;width:40px;height:20px;background:#d4d4d4"></div>
<svg style="position:absolute;left:1090px;top:716px" width="280" height="19" viewBox="1090 716 280 19">
<rect x="1093.5" y="718.5" width="12" height="12" fill="#e9e9e9"/>
<g fill="none" stroke="#444" stroke-width="1.1">
<rect x="1093.5" y="718.5" width="12" height="12"/><path d="M1097.5 718.5 V730.5 M1101.5 718.5 V730.5 M1093.5 722.5 H1105.5 M1093.5 726.5 H1105.5"/>
<rect x="1133.5" y="718.5" width="13" height="12"/><rect x="1136.5" y="721.5" width="7" height="6"/><path d="M1138 723 H1142 M1138 724.8 H1142 M1138 726.6 H1142" stroke-width="0.9"/>
<rect x="1173.5" y="718.5" width="13" height="12"/><path d="M1173.5 725.2 H1182.4 V718.5 M1178 718.5 V725.2"/>
<line x1="1205.6" y1="724.5" x2="1214.3" y2="724.5"/>
<line x1="1218.6" y1="725.5" x2="1318.7" y2="725.5" stroke="#555"/>
<path d="M1328 720.7 V729.4 M1323.8 725 H1332.2"/>
<line x1="1269.3" y1="723" x2="1269.3" y2="727.7" stroke-width="1"/>
</g>
<rect x="1259" y="720" width="5" height="11" fill="#4a4a4a"/>
</svg>
<div style="left:1345px;top:718px;white-space:nowrap;color:#444;font-size:11.3px;line-height:14px">85%</div>
<div style="left:8px;top:736px;width:1366px;height:8px;background:linear-gradient(90deg,#1b1b1b 0,#1b1b1b 49px,#333 49px,#333 335px,#1f2a28 335px,#263a36 60%,#1e2d2b 80%,#1a1a1a)"></div>
<div style="left:282px;top:740px;width:36px;height:12px;background:#c9bdd0;border-radius:50%"></div>
<div style="left:787px;top:736px;width:48px;height:8px;background:#4a4a42"></div>
<div style="left:1267px;top:740px;white-space:nowrap;color:#fff;font-size:10px;line-height:12px">6:41 PM</div>
</body></html>
